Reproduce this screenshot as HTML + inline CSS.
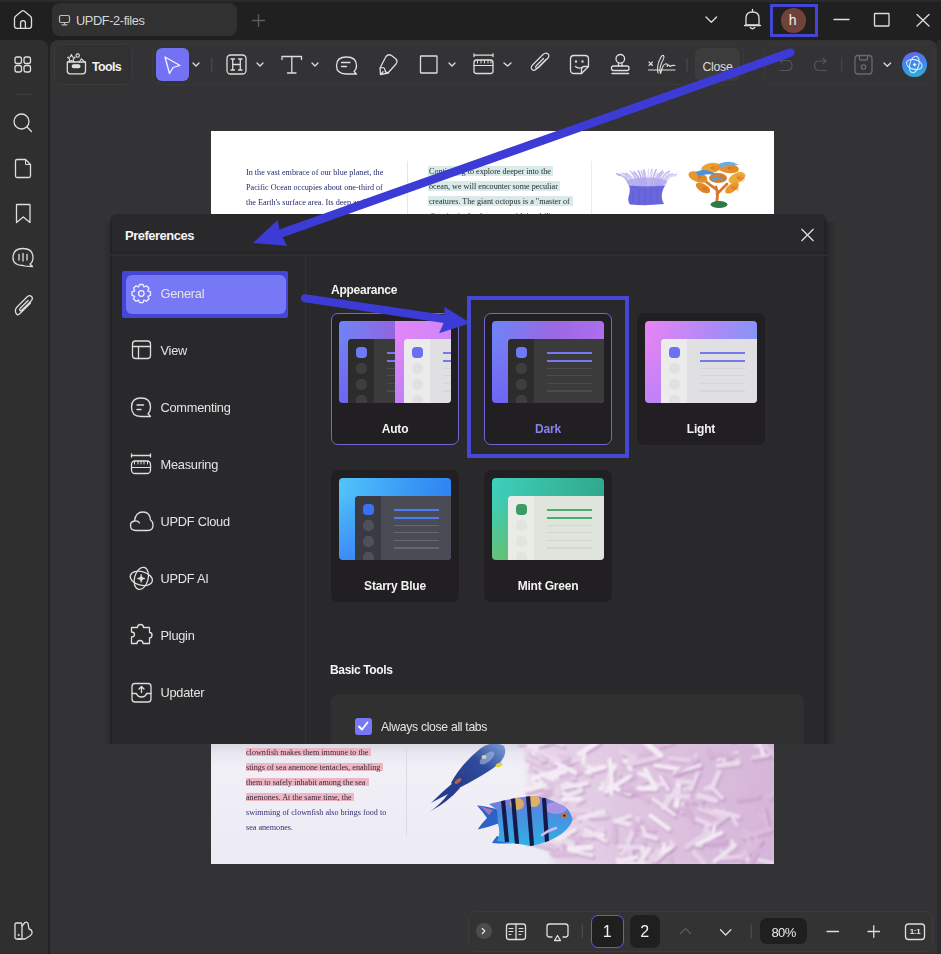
<!DOCTYPE html>
<html><head><meta charset="utf-8">
<style>
*{box-sizing:border-box;margin:0;padding:0}
html,body{width:941px;height:954px;overflow:hidden;background:#202020;font-family:"Liberation Sans",sans-serif;color:#e6e6e6}
.a{position:absolute}
svg{position:absolute;overflow:visible}
#top{left:0;top:0;width:941px;height:40px;background:#202020}
#side{left:0;top:40px;width:48px;height:914px;background:#2f2f2f;border-top-right-radius:8px}
#sep{left:48px;top:40px;width:2px;height:914px;background:#232323}
#main{left:50px;top:40px;width:887px;height:914px;background:#333234;border-radius:8px 8px 0 0}
#rstrip{left:937px;top:40px;width:4px;height:914px;background:#2b2a2c}
.nav{left:160.5px;font-size:12.8px;letter-spacing:-0.25px;color:#e4e4e4;line-height:16px;white-space:nowrap}
.lab{width:128px;text-align:center;font-size:12px;font-weight:bold;letter-spacing:-0.2px;line-height:16px;white-space:nowrap}
.ico{stroke:#dedede;fill:none;stroke-width:1.3;stroke-linecap:round;stroke-linejoin:round}
</style></head>
<body>
<div class="a" id="top"></div>
<div class="a" style="left:0;top:0;width:941px;height:2px;background:#2a2a2a"></div>
<div class="a" id="side"></div>
<div class="a" id="sep"></div>
<div class="a" id="rstrip"></div>
<div class="a" id="main"></div>


<!-- TOPBAR -->
<svg style="left:0;top:0" width="941" height="40" class="ico" stroke-width="1.2">
  <path d="M14.5 18.5 Q14.5 17 15.8 16 L21.6 11.2 Q23 10.2 24.4 11.2 L30.2 16 Q31.5 17 31.5 18.5 V26 Q31.5 28.3 29.2 28.3 H16.8 Q14.5 28.3 14.5 26 Z"/>
  <path d="M20.6 28.3 V22.8 Q20.6 20.6 23 20.6 Q25.4 20.6 25.4 22.8 V28.3"/>
</svg>
<div class="a" style="left:52px;top:3px;width:185px;height:33px;background:#313131;border-radius:8px"></div>
<svg style="left:0;top:0" width="941" height="40" fill="none" stroke="#bdbdbd" stroke-width="1.2" stroke-linecap="round" stroke-linejoin="round">
  <rect x="59.5" y="15.5" width="10" height="7" rx="1.5"/>
  <path d="M64.5 22.5 V24.5 M62 24.8 H67"/>
</svg>
<div class="a" style="left:76px;top:13px;font-size:12.8px;letter-spacing:-0.4px;color:#d6d6d6;line-height:16px;white-space:nowrap">UPDF-2-files</div>
<svg style="left:0;top:0" width="941" height="40" fill="none" stroke="#5c5c5c" stroke-width="1.3">
  <path d="M258.5 14 V27 M252 20.5 H265"/>
</svg>
<svg style="left:0;top:0" width="941" height="40" class="ico" stroke-width="1.2">
  <path d="M706 17 L711.3 22.3 L716.6 17"/>
  <path d="M746 25 V18 Q746 12 752.5 12 Q759 12 759 18 V25 Z" />
  <path d="M744.5 25.5 H760.5"/>
  <path d="M750.3 27.5 Q752.5 30 754.7 27.5"/>
  <path d="M752.5 9.5 V11.5"/>
  <path d="M834 19.5 H849"/>
  <rect x="874.5" y="13.5" width="14.5" height="12.5" rx="0.5"/>
  <path d="M917 14.5 L929 26 M929 14.5 L917 26"/>
</svg>
<div class="a" style="left:781px;top:8px;width:24.5px;height:24.5px;border-radius:50%;background:#714238"></div>
<div class="a" style="left:780.5px;top:11.5px;width:24.5px;text-align:center;font-size:14px;color:#f2f2f2;line-height:16px">h</div>
<div class="a" style="left:770px;top:4px;width:48px;height:33px;border:3px solid #4444d6"></div>

<!-- SIDEBAR ICONS -->
<svg style="left:0;top:40px" width="48" height="914" class="ico" stroke-width="1.2">
  <rect x="15" y="17" width="6.5" height="6.5" rx="2"/>
  <rect x="24" y="17" width="6.5" height="6.5" rx="2"/>
  <rect x="15" y="25.5" width="6.5" height="6.5" rx="2"/>
  <rect x="24" y="25.5" width="6.5" height="6.5" rx="2"/>
  <path d="M16 54.3 H32" stroke="#3c3c3c"/>
  <circle cx="21.5" cy="81.5" r="7.5"/>
  <path d="M27 87 L31.5 91.5"/>
  <path d="M15.5 121 Q15.5 119.5 17 119.5 H25.5 L30.5 124.5 V136 Q30.5 137.5 29 137.5 H17 Q15.5 137.5 15.5 136 Z"/>
  <path d="M25.5 119.5 V124.5 H30.5" stroke-width="1"/>
  <path d="M16.5 165 Q16.5 164.5 17 164.5 H29.5 Q30 164.5 30 165 V182.5 L23.3 177 L16.5 182.5 Z"/>
  <path d="M23 225.5 Q13 225.5 13 217.5 Q13 208.5 23 208.5 Q33 208.5 33 217.5 Q33 222 30 224 L32.5 226.5 Q26 226.5 23 225.5 Z"/>
  <path d="M19 214.5 V220 M23 213.5 V221 M27 214.5 V220"/>
  <path d="M30.5 263 L20 273.5 Q17 276.5 15.7 272.5 Q14.5 269.5 17.5 266.5 L27 257 Q29.5 254.5 31.5 256.5 Q33.5 258.5 31 261 L22 270 Q20.7 271.3 19.8 270.4 Q19 269.5 20.3 268.2 L28 260.5"/>
</svg>
<svg style="left:0;top:0" width="48" height="954" class="ico">
  <rect x="15" y="923" width="7" height="16" rx="1.5"/>
  <path d="M22 926 L25 922.5 Q27 921.5 28 923.5 L29 929 Q31.5 929.5 32 931.5 Q32.5 934 30.5 935.5 L25 939 H18"/>
  <circle cx="18.5" cy="935" r="0.6" stroke-width="1"/>
</svg>


<!-- TOOLBAR -->
<div class="a" style="left:54px;top:44px;width:78px;height:41px;border:1px solid #3a3a3a;border-radius:7px;background:#313131"></div>
<svg style="left:0;top:0" width="941" height="100" class="ico" stroke-width="1.15">
  <path d="M67.3 62 H85.5 V71 Q85.5 73.8 82.7 73.8 H70.1 Q67.3 73.8 67.3 71 Z"/>
  <rect x="72.3" y="64.8" width="7.6" height="2.8" rx="1.4" fill="#dedede"/>
  <path d="M71.40 54.60 L72.52 57.06 L75.20 57.36 L73.21 59.19 L73.75 61.84 L71.40 60.50 L69.05 61.84 L69.59 59.19 L67.60 57.36 L70.28 57.06 Z" stroke-width="1.1"/>
  <circle cx="77.7" cy="55.6" r="1.7" stroke-width="1.1"/>
  <path d="M79.3 62 L81.4 58.8 L84.6 62" stroke-width="1.1"/>
</svg>
<div class="a" style="left:92px;top:58.5px;font-size:12.5px;font-weight:bold;letter-spacing:-0.7px;color:#f0f0f0;line-height:16px">Tools</div>

<div class="a" style="left:152px;top:44px;width:592px;height:41px;border:1px solid #393939;border-radius:8px"></div>
<div class="a" style="left:156px;top:48px;width:32.5px;height:33px;background:#7472f4;border-radius:6px"></div>
<div class="a" style="left:764px;top:44px;width:171px;height:41px;border:1px solid #393939;border-radius:8px"></div>
<div class="a" style="left:695px;top:48px;width:45px;height:33px;background:#3c3c3c;border-radius:6px"></div>
<div class="a" style="left:702.5px;top:58.5px;font-size:12.3px;color:#dcdcdc;line-height:16px;letter-spacing:-0.3px">Close</div>

<svg style="left:0;top:0" width="941" height="100" class="ico" stroke-width="1.15">
  <path d="M165 57 L180 65.5 L173 67.5 L169.5 73.5 Z" stroke="#f4f4ff"/>
  <path d="M193 63 L196 66 L199 63"/>
  <path d="M211.7 58 V71.5" stroke="#4a4a4a"/>
  <rect x="227" y="55" width="19" height="19" rx="3.5"/>
  <path d="M231 59 H234.5 M232.7 59 V70 M231 70 H234.5 M238.5 59 H242 M240.3 59 V70 M238.5 70 H242 M232.7 64.5 H240.3"/>
  <path d="M257 63 L260 66 L263 63"/>
  <path d="M282 59.5 V56.5 H301.5 V59.5 M291.8 56.5 V73 M287.5 73 H296"/>
  <path d="M312 63 L315 66 L318 63"/>
  <path d="M346 74 Q336.5 74 336.5 65.5 Q336.5 57 346.5 57 Q356.5 57 356.5 65.5 Q356.5 69.5 354 71.5 L356.5 74 Z"/>
  <path d="M341.5 62.5 H350 M341.5 66.5 H346.5"/>
  <path d="M386 56.5 Q388.5 53.5 391.5 55.5 L396 59 Q398 61.5 396 64 L388 73 L380.5 74.5 L380 68 Z"/>
  <path d="M380.5 68 Q384.5 66.5 385 70 Q385 72.5 388 73" />
  <path d="M381.5 73.5 L383 71.8"/>
  <rect x="420.5" y="56" width="16.5" height="17" rx="0.5"/>
  <path d="M449 63 L452 66 L455 63"/>
  <path d="M474 55.2 H493 M474 53.8 V56.6 M493 53.8 V56.6"/>
  <rect x="474" y="60" width="19" height="13.5" rx="2.5"/>
  <path d="M474 65.5 H493 M477.5 60 V63 M481 60 V63 M484.5 60 V63 M488 60 V63 M491 60 V63" stroke-width="1"/>
  <path d="M504 63 L507.5 66 L511 63"/>
  <path d="M546 59.5 L537 68.5 Q534 71.5 532 69.5 Q530 67.5 533 64.5 L543 54.5 Q546 52 548 54 Q550 56 547.5 58.5 L538.5 67.5 Q537 69 536 68 Q535 67 536.5 65.5 L543.5 58.5" stroke-width="1.2"/>
  <path d="M574 55.5 H585 Q588.5 55.5 588.5 59 V66.5 L581.5 73.5 H574 Q570.5 73.5 570.5 70 V59 Q570.5 55.5 574 55.5 Z"/>
  <path d="M588.5 66.5 H584.5 Q581.5 66.5 581.5 69.5 V73.5"/>
  <path d="M575.5 66.5 Q578 69 581.5 67.5"/>
  <circle cx="576" cy="61.5" r="0.5" stroke-width="1.4"/>
  <circle cx="582.5" cy="61.5" r="0.5" stroke-width="1.4"/>
  <circle cx="620.3" cy="58.8" r="4.3"/>
  <path d="M618.5 63 V66 M622 63 V66"/>
  <rect x="611.5" y="66" width="17.5" height="4.5" rx="2"/>
  <path d="M612 73.5 H628.5"/>
  <path d="M649 62 L652.5 65.5 M652.5 62 L649 65.5" stroke-width="1.1"/>
  <path d="M648.5 70 H675" stroke-width="1"/>
  <path d="M658 73 Q656.5 66 660 59 Q662 54.5 663.5 55.5 Q665 57 661.5 63 Q659 69 660.5 73.5 Q661.5 70 663 66 Q665 63 667 64 Q668 67 667 66 Q669 64 670 66.5 Q672 65 675 65.5" stroke-width="1.1"/>
  <path d="M687 59 V71.5" stroke="#4a4a4a"/>
  <path d="M780 61 Q779 59.5 780.5 59.5 M779.5 60 L782 62.5 M780 60.5 H787 Q792 60.5 792 65.5 Q792 70.5 787 70.5 H780" stroke="#555" stroke-width="1.2"/>
  <path d="M826 61 L823 58.5 M826 61 L823 63.5 M826 61 H819 Q814.5 61 814.5 65.5 Q814.5 70.5 819 70.5 H826" stroke="#555" stroke-width="1.2"/>
  <path d="M841.7 58 V72" stroke="#454545"/>
  <path d="M858 55.5 H869 Q872 55.5 872 58.5 V71 Q872 74 869 74 H858 Q855 74 855 71 V58.5 Q855 55.5 858 55.5 Z" stroke="#6a6a6a"/>
  <path d="M859.5 55.5 V59 Q859.5 60 860.5 60 H866.5 Q867.5 60 867.5 59 V55.5" stroke="#6a6a6a"/>
  <circle cx="863.5" cy="67" r="2.2" stroke="#6a6a6a"/>
  <path d="M884 63 L887.3 66.3 L890.6 63"/>
</svg>
<div class="a" style="left:902px;top:52px;width:24.5px;height:24.5px;border-radius:50%;background:linear-gradient(170deg,#6a5ef0 0%,#3f86ec 45%,#2eb2d6 100%)"></div>
<svg style="left:0;top:0" width="941" height="100" fill="none" stroke="#ffffff" stroke-width="1.2">
  <ellipse cx="914.3" cy="64.5" rx="8" ry="4.8" transform="rotate(15 914.3 64.5)" stroke="#cdefff" stroke-width="1.1"/>
  <ellipse cx="914.3" cy="64.5" rx="4.5" ry="8.5" transform="rotate(15 914.3 64.5)" stroke="#cdefff" stroke-width="1.1"/>
  <path d="M914.6 62.8 L915.2 64 L916.4 64.6 L915.2 65.2 L914.6 66.4 L914 65.2 L912.8 64.6 L914 64 Z" fill="#fff" stroke-width="0.4"/>
</svg>

<!-- page top -->
<div class="a" style="left:211px;top:131px;width:563px;height:83px;background:#fff;overflow:hidden">
<div class="a" style="left:35px;top:34.5px;color:#232a6c;font-family:'Liberation Serif',serif;font-size:9px;line-height:12px;white-space:nowrap;transform:scaleX(0.905);transform-origin:0 0;">In the vast embrace of our blue planet, the</div>
<div class="a" style="left:35px;top:49.5px;color:#232a6c;font-family:'Liberation Serif',serif;font-size:9px;line-height:12px;white-space:nowrap;transform:scaleX(0.905);transform-origin:0 0;">Pacific Ocean occupies about one-third of</div>
<div class="a" style="left:35px;top:64.5px;color:#232a6c;font-family:'Liberation Serif',serif;font-size:9px;line-height:12px;white-space:nowrap;transform:scaleX(0.905);transform-origin:0 0;">the Earth's surface area. Its deep and</div>
<div class="a" style="left:35px;top:79.5px;color:#232a6c;font-family:'Liberation Serif',serif;font-size:9px;line-height:12px;white-space:nowrap;transform:scaleX(0.905);transform-origin:0 0;">and mysterious waters are home to</div>
<div class="a" style="left:217px;top:35.4px;width:125px;height:9.6px;background:#d9ebe8"></div>
<div class="a" style="left:218px;top:34px;color:#2a2a34;font-family:'Liberation Serif',serif;font-size:9px;line-height:12px;white-space:nowrap;transform:scaleX(0.905);transform-origin:0 0;">Continuing to explore deeper into the</div>
<div class="a" style="left:217px;top:50.4px;width:132px;height:9.6px;background:#d9ebe8"></div>
<div class="a" style="left:218px;top:49px;color:#2a2a34;font-family:'Liberation Serif',serif;font-size:9px;line-height:12px;white-space:nowrap;transform:scaleX(0.905);transform-origin:0 0;">ocean, we will encounter some peculiar</div>
<div class="a" style="left:217px;top:65.4px;width:144.5px;height:9.6px;background:#d9ebe8"></div>
<div class="a" style="left:218px;top:64px;color:#2a2a34;font-family:'Liberation Serif',serif;font-size:9px;line-height:12px;white-space:nowrap;transform:scaleX(0.905);transform-origin:0 0;">creatures. The giant octopus is a "master of</div>
<div class="a" style="left:218px;top:79px;color:#2a2a34;font-family:'Liberation Serif',serif;font-size:9px;line-height:12px;white-space:nowrap;transform:scaleX(0.905);transform-origin:0 0;">disguise in the deep sea, with its ability</div>
<div class="a" style="left:196px;top:30px;width:1px;height:60px;background:#e6e6ea"></div>
<div class="a" style="left:380px;top:30px;width:1px;height:60px;background:#ececf0"></div>
<svg style="left:0;top:0" width="563" height="83">
<path d="M417 53 Q420 58 418 64 Q416 70 419 73.5 Q435 75 453 73 Q450 68 451 62 Q452 57 455 53 Q436 57 417 53 Z" fill="#6a66dc"/>
<path d="M422 60 V72 M428 58 V73 M434 58 V74 M440 58 V73 M446 58 V72" stroke="#5c58d0" stroke-width="1" fill="none" opacity="0.6"/>
<path d="M418.0 54 Q414.2 44.0 405.3 42.6" stroke="#c8c0f2" stroke-width="1.5" fill="none" stroke-linecap="round"/>
<path d="M419.4 54 Q415.6 44.0 406.7 43.7" stroke="#b8b0ee" stroke-width="1.5" fill="none" stroke-linecap="round"/>
<path d="M420.9 54 Q418.0 44.0 411.1 44.7" stroke="#d6d0f6" stroke-width="1.5" fill="none" stroke-linecap="round"/>
<path d="M422.3 54 Q419.0 44.0 411.3 42.3" stroke="#c8c0f2" stroke-width="1.5" fill="none" stroke-linecap="round"/>
<path d="M423.8 54 Q421.0 44.0 414.6 42.3" stroke="#c8c0f2" stroke-width="1.5" fill="none" stroke-linecap="round"/>
<path d="M425.2 54 Q423.4 44.0 419.3 40.1" stroke="#d6d0f6" stroke-width="1.5" fill="none" stroke-linecap="round"/>
<path d="M426.6 54 Q424.9 44.0 420.9 41.5" stroke="#c8c0f2" stroke-width="1.5" fill="none" stroke-linecap="round"/>
<path d="M428.1 54 Q426.6 44.0 423.1 40.2" stroke="#d6d0f6" stroke-width="1.5" fill="none" stroke-linecap="round"/>
<path d="M429.5 54 Q427.7 44.0 423.4 41.6" stroke="#b8b0ee" stroke-width="1.5" fill="none" stroke-linecap="round"/>
<path d="M431.0 54 Q429.9 44.0 427.3 39.8" stroke="#b8b0ee" stroke-width="1.5" fill="none" stroke-linecap="round"/>
<path d="M432.4 54 Q431.8 44.0 430.2 39.9" stroke="#c8c0f2" stroke-width="1.5" fill="none" stroke-linecap="round"/>
<path d="M433.8 54 Q433.5 44.0 432.7 39.3" stroke="#b8b0ee" stroke-width="1.5" fill="none" stroke-linecap="round"/>
<path d="M435.3 54 Q434.7 44.0 433.2 39.1" stroke="#c8c0f2" stroke-width="1.5" fill="none" stroke-linecap="round"/>
<path d="M436.7 54 Q437.0 44.0 437.7 38.2" stroke="#e0dcf8" stroke-width="1.5" fill="none" stroke-linecap="round"/>
<path d="M438.2 54 Q438.9 44.0 440.7 38.6" stroke="#e0dcf8" stroke-width="1.5" fill="none" stroke-linecap="round"/>
<path d="M439.6 54 Q440.2 44.0 441.4 38.2" stroke="#d6d0f6" stroke-width="1.5" fill="none" stroke-linecap="round"/>
<path d="M441.0 54 Q442.3 44.0 445.2 38.7" stroke="#b8b0ee" stroke-width="1.5" fill="none" stroke-linecap="round"/>
<path d="M442.5 54 Q443.8 44.0 446.9 41.7" stroke="#e0dcf8" stroke-width="1.5" fill="none" stroke-linecap="round"/>
<path d="M443.9 54 Q445.2 44.0 448.4 42.6" stroke="#c8c0f2" stroke-width="1.5" fill="none" stroke-linecap="round"/>
<path d="M445.4 54 Q447.2 44.0 451.6 39.8" stroke="#b8b0ee" stroke-width="1.5" fill="none" stroke-linecap="round"/>
<path d="M446.8 54 Q448.5 44.0 452.6 41.6" stroke="#c8c0f2" stroke-width="1.5" fill="none" stroke-linecap="round"/>
<path d="M448.2 54 Q451.2 44.0 458.2 40.4" stroke="#b8b0ee" stroke-width="1.5" fill="none" stroke-linecap="round"/>
<path d="M449.7 54 Q452.2 44.0 458.2 42.0" stroke="#e0dcf8" stroke-width="1.5" fill="none" stroke-linecap="round"/>
<path d="M451.1 54 Q454.2 44.0 461.5 42.9" stroke="#c8c0f2" stroke-width="1.5" fill="none" stroke-linecap="round"/>
<path d="M452.6 54 Q456.4 44.0 465.4 43.4" stroke="#c8c0f2" stroke-width="1.5" fill="none" stroke-linecap="round"/>
<path d="M454.0 54 Q457.1 44.0 464.2 44.8" stroke="#e0dcf8" stroke-width="1.5" fill="none" stroke-linecap="round"/>
<ellipse cx="436" cy="51" rx="20" ry="4.5" fill="#aea6ec" opacity="0.75"/>
<path d="M505 73 Q508 64 505 56 M506 63 Q511 58 516 53 M505 58 Q499 54 494 50" stroke="#d8782a" stroke-width="2.8" fill="none" stroke-linecap="round"/>
<ellipse cx="508" cy="73.5" rx="8.5" ry="3.5" fill="#2d7a4a"/>
<ellipse cx="487" cy="46" rx="10" ry="5" fill="#e8962e" transform="rotate(20 487 46)"/>
<path d="M487.0 46.0 L493.9 44.1" stroke="#c8701e" stroke-width="0.7" opacity="0.7"/>
<path d="M487.0 46.0 L495.9 46.2" stroke="#c8701e" stroke-width="0.7" opacity="0.7"/>
<path d="M487.0 46.0 L495.5 48.5" stroke="#c8701e" stroke-width="0.7" opacity="0.7"/>
<path d="M487.0 46.0 L492.8 50.4" stroke="#c8701e" stroke-width="0.7" opacity="0.7"/>
<path d="M487.0 46.0 L488.6 51.4" stroke="#c8701e" stroke-width="0.7" opacity="0.7"/>
<ellipse cx="492" cy="57" rx="8" ry="4" fill="#e08a28" transform="rotate(30 492 57)"/>
<path d="M492.0 57.0 L498.2 56.2" stroke="#c8701e" stroke-width="0.7" opacity="0.7"/>
<path d="M492.0 57.0 L499.2 58.0" stroke="#c8701e" stroke-width="0.7" opacity="0.7"/>
<path d="M492.0 57.0 L498.2 59.8" stroke="#c8701e" stroke-width="0.7" opacity="0.7"/>
<path d="M492.0 57.0 L495.6 61.1" stroke="#c8701e" stroke-width="0.7" opacity="0.7"/>
<path d="M492.0 57.0 L492.0 61.6" stroke="#c8701e" stroke-width="0.7" opacity="0.7"/>
<ellipse cx="500" cy="37" rx="10" ry="5" fill="#f0a030" transform="rotate(-10 500 37)"/>
<path d="M500.0 37.0 L503.1 33.8" stroke="#c8701e" stroke-width="0.7" opacity="0.7"/>
<path d="M500.0 37.0 L506.9 35.1" stroke="#c8701e" stroke-width="0.7" opacity="0.7"/>
<path d="M500.0 37.0 L508.9 37.2" stroke="#c8701e" stroke-width="0.7" opacity="0.7"/>
<path d="M500.0 37.0 L508.5 39.5" stroke="#c8701e" stroke-width="0.7" opacity="0.7"/>
<path d="M500.0 37.0 L505.8 41.4" stroke="#c8701e" stroke-width="0.7" opacity="0.7"/>
<ellipse cx="517" cy="37" rx="11" ry="5" fill="#e89030" transform="rotate(10 517 37)"/>
<path d="M517.0 37.0 L523.4 34.6" stroke="#c8701e" stroke-width="0.7" opacity="0.7"/>
<path d="M517.0 37.0 L526.3 36.5" stroke="#c8701e" stroke-width="0.7" opacity="0.7"/>
<path d="M517.0 37.0 L526.7 38.8" stroke="#c8701e" stroke-width="0.7" opacity="0.7"/>
<path d="M517.0 37.0 L524.6 40.9" stroke="#c8701e" stroke-width="0.7" opacity="0.7"/>
<path d="M517.0 37.0 L520.4 42.2" stroke="#c8701e" stroke-width="0.7" opacity="0.7"/>
<ellipse cx="526" cy="47" rx="9" ry="5" fill="#f0a838" transform="rotate(-25 526 47)"/>
<path d="M526.0 47.0 L526.7 43.5" stroke="#c8701e" stroke-width="0.7" opacity="0.7"/>
<path d="M526.0 47.0 L530.6 44.3" stroke="#c8701e" stroke-width="0.7" opacity="0.7"/>
<path d="M526.0 47.0 L533.3 46.1" stroke="#c8701e" stroke-width="0.7" opacity="0.7"/>
<path d="M526.0 47.0 L534.1 48.4" stroke="#c8701e" stroke-width="0.7" opacity="0.7"/>
<path d="M526.0 47.0 L532.6 50.6" stroke="#c8701e" stroke-width="0.7" opacity="0.7"/>
<ellipse cx="521" cy="57" rx="8" ry="4" fill="#e89a30" transform="rotate(-35 521 57)"/>
<path d="M521.0 57.0 L520.4 54.4" stroke="#c8701e" stroke-width="0.7" opacity="0.7"/>
<path d="M521.0 57.0 L524.0 54.7" stroke="#c8701e" stroke-width="0.7" opacity="0.7"/>
<path d="M521.0 57.0 L526.9 55.9" stroke="#c8701e" stroke-width="0.7" opacity="0.7"/>
<path d="M521.0 57.0 L528.2 57.7" stroke="#c8701e" stroke-width="0.7" opacity="0.7"/>
<path d="M521.0 57.0 L527.5 59.5" stroke="#c8701e" stroke-width="0.7" opacity="0.7"/>
<ellipse cx="507" cy="47" rx="9" ry="5" fill="#d88028" transform="rotate(0 507 47)"/>
<path d="M507.0 47.0 L511.1 44.1" stroke="#c8701e" stroke-width="0.7" opacity="0.7"/>
<path d="M507.0 47.0 L514.0 45.8" stroke="#c8701e" stroke-width="0.7" opacity="0.7"/>
<path d="M507.0 47.0 L515.1 48.0" stroke="#c8701e" stroke-width="0.7" opacity="0.7"/>
<path d="M507.0 47.0 L514.0 50.2" stroke="#c8701e" stroke-width="0.7" opacity="0.7"/>
<path d="M507.0 47.0 L511.1 51.9" stroke="#c8701e" stroke-width="0.7" opacity="0.7"/>
<path d="M485 41 Q495 36 506 44 Q496 42 487 45 Z" fill="#4a90e0"/>
<path d="M508 33 Q519 28 528 34 Q518 33 510 37 Z" fill="#6aaee8"/>
<path d="M500 47 Q508 44 515 50 Q508 48 502 50 Z" fill="#5a9ee0"/>
</svg>
</div>
<div class="a" style="left:211px;top:744px;width:563px;height:120px;overflow:hidden;background:linear-gradient(180deg,#d9d7e2 0%,#e9e7f0 8%,#f1f0f7 20%,#efeef6 50%,#ecebf4 100%)">
<div class="a" style="left:35px;top:3.8px;width:125px;height:8.5px;background:#eeb6c2"></div>
<div class="a" style="left:35px;top:2.2px;color:#3a2a3c;font-family:'Liberation Serif',serif;font-size:9px;line-height:12px;white-space:nowrap;transform:scaleX(0.905);transform-origin:0 0;">clownfish makes them immune to the</div>
<div class="a" style="left:35px;top:18.75px;width:136.5px;height:8.5px;background:#eeb6c2"></div>
<div class="a" style="left:35px;top:17.15px;color:#3a2a3c;font-family:'Liberation Serif',serif;font-size:9px;line-height:12px;white-space:nowrap;transform:scaleX(0.905);transform-origin:0 0;">stings of sea anemone tentacles, enabling</div>
<div class="a" style="left:35px;top:33.699999999999996px;width:122.5px;height:8.5px;background:#eeb6c2"></div>
<div class="a" style="left:35px;top:32.1px;color:#3a2a3c;font-family:'Liberation Serif',serif;font-size:9px;line-height:12px;white-space:nowrap;transform:scaleX(0.905);transform-origin:0 0;">them to safely inhabit among the sea</div>
<div class="a" style="left:35px;top:48.64999999999999px;width:108px;height:8.5px;background:#eeb6c2"></div>
<div class="a" style="left:35px;top:47.05px;color:#3a2a3c;font-family:'Liberation Serif',serif;font-size:9px;line-height:12px;white-space:nowrap;transform:scaleX(0.905);transform-origin:0 0;">anemones. At the same time, the</div>
<div class="a" style="left:35px;top:61.8px;color:#2e2e70;font-family:'Liberation Serif',serif;font-size:9px;line-height:12px;white-space:nowrap;transform:scaleX(0.905);transform-origin:0 0;">swimming of clownfish also brings food to</div>
<div class="a" style="left:35px;top:76.8px;color:#2e2e70;font-family:'Liberation Serif',serif;font-size:9px;line-height:12px;white-space:nowrap;transform:scaleX(0.905);transform-origin:0 0;">sea anemones.</div>
<div class="a" style="left:195px;top:0;width:1px;height:92px;background:#dcdae6"></div>
<svg style="left:0;top:0" width="563" height="120">
<defs><linearGradient id="cg" x1="0" y1="0" x2="1" y2="0"><stop offset="0" stop-color="#e8d8ea"/><stop offset="0.4" stop-color="#dfc6e1"/><stop offset="1" stop-color="#d5b4d8"/></linearGradient><filter id="bl" x="-10%" y="-10%" width="120%" height="120%"><feGaussianBlur stdDeviation="4"/></filter><filter id="bl2" x="-5%" y="-5%" width="110%" height="110%"><feGaussianBlur stdDeviation="1.1"/></filter></defs>
<path d="M325 -5 Q310 35 326 65 Q338 95 345 125 H570 V-5 Z" fill="url(#cg)" filter="url(#bl)"/>
<g filter="url(#bl2)" stroke-linecap="round" fill="none">
<path d="M423.1 34.0 L417.0 25.3" stroke="#c8a2cb" stroke-width="4.9" opacity="0.6"/>
<path d="M372.8 57.0 L361.5 62.4" stroke="#bd92c2" stroke-width="4.9" opacity="0.6"/>
<path d="M371.9 96.9 L354.0 102.1" stroke="#c8a2cb" stroke-width="4.5" opacity="0.6"/>
<path d="M364.7 110.3 L342.8 111.5" stroke="#c8a2cb" stroke-width="5.1" opacity="0.6"/>
<path d="M530.9 111.8 L542.1 101.6" stroke="#bd92c2" stroke-width="5.1" opacity="0.6"/>
<path d="M417.8 51.0 L439.6 35.4" stroke="#bd92c2" stroke-width="5.8" opacity="0.6"/>
<path d="M371.7 16.6 L356.6 21.4" stroke="#c29ac6" stroke-width="5.5" opacity="0.6"/>
<path d="M473.6 60.0 L472.6 69.7" stroke="#c29ac6" stroke-width="5.6" opacity="0.6"/>
<path d="M420.3 51.5 L393.6 42.0" stroke="#c29ac6" stroke-width="6.4" opacity="0.6"/>
<path d="M459.0 86.8 L441.1 73.7" stroke="#c8a2cb" stroke-width="5.8" opacity="0.6"/>
<path d="M547.1 4.0 L552.3 -17.8" stroke="#c29ac6" stroke-width="4.5" opacity="0.6"/>
<path d="M432.9 100.7 L421.8 107.3" stroke="#bd92c2" stroke-width="6.3" opacity="0.6"/>
<path d="M351.9 79.5 L338.9 86.6" stroke="#c8a2cb" stroke-width="5.3" opacity="0.6"/>
<path d="M411.5 18.1 L422.8 21.2" stroke="#bd92c2" stroke-width="5.0" opacity="0.6"/>
<path d="M353.6 16.7 L341.3 18.6" stroke="#bd92c2" stroke-width="6.4" opacity="0.6"/>
<path d="M484.7 110.7 L494.6 121.3" stroke="#c29ac6" stroke-width="5.5" opacity="0.6"/>
<path d="M418.4 42.2 L437.9 57.4" stroke="#c8a2cb" stroke-width="5.2" opacity="0.6"/>
<path d="M454.2 126.1 L440.8 127.2" stroke="#bd92c2" stroke-width="5.2" opacity="0.6"/>
<path d="M411.9 10.3 L409.4 31.7" stroke="#bd92c2" stroke-width="4.9" opacity="0.6"/>
<path d="M334.6 18.0 L317.2 7.8" stroke="#bd92c2" stroke-width="6.0" opacity="0.6"/>
<path d="M460.7 16.1 L481.9 19.0" stroke="#c8a2cb" stroke-width="4.6" opacity="0.6"/>
<path d="M541.4 124.2 L535.9 111.6" stroke="#bd92c2" stroke-width="6.4" opacity="0.6"/>
<path d="M371.1 44.7 L351.1 38.3" stroke="#bd92c2" stroke-width="6.0" opacity="0.6"/>
<path d="M418.1 98.3 L422.6 119.3" stroke="#c29ac6" stroke-width="5.0" opacity="0.6"/>
<path d="M539.1 125.0 L548.3 105.0" stroke="#c29ac6" stroke-width="5.0" opacity="0.6"/>
<path d="M393.3 93.2 L375.0 92.8" stroke="#bd92c2" stroke-width="4.7" opacity="0.6"/>
<path d="M335.3 0.8 L319.4 4.8" stroke="#c8a2cb" stroke-width="5.5" opacity="0.6"/>
<path d="M561.4 87.0 L534.1 94.5" stroke="#c29ac6" stroke-width="6.3" opacity="0.6"/>
<path d="M561.6 125.4 L551.1 135.0" stroke="#bd92c2" stroke-width="5.3" opacity="0.6"/>
<path d="M377.0 26.5 L355.8 34.0" stroke="#c8a2cb" stroke-width="4.6" opacity="0.6"/>
<path d="M535.8 114.0 L512.2 116.5" stroke="#c8a2cb" stroke-width="4.8" opacity="0.6"/>
<path d="M362.8 101.0 L335.2 95.9" stroke="#bd92c2" stroke-width="4.6" opacity="0.6"/>
<path d="M514.4 98.7 L499.3 100.4" stroke="#c29ac6" stroke-width="6.4" opacity="0.6"/>
<path d="M419.0 99.6 L428.3 77.2" stroke="#c29ac6" stroke-width="5.3" opacity="0.6"/>
<path d="M427.8 48.5 L451.4 41.9" stroke="#c8a2cb" stroke-width="4.6" opacity="0.6"/>
<path d="M359.8 19.1 L334.9 29.7" stroke="#bd92c2" stroke-width="5.4" opacity="0.6"/>
<path d="M377.1 101.8 L350.5 91.4" stroke="#c8a2cb" stroke-width="6.3" opacity="0.6"/>
<path d="M419.9 82.4 L406.2 79.0" stroke="#c8a2cb" stroke-width="4.7" opacity="0.6"/>
<path d="M564.4 -1.1 L551.8 -15.0" stroke="#c29ac6" stroke-width="6.4" opacity="0.6"/>
<path d="M445.7 118.4 L464.3 102.9" stroke="#bd92c2" stroke-width="4.9" opacity="0.6"/>
<path d="M390.3 24.4 L374.6 28.2" stroke="#c8a2cb" stroke-width="6.4" opacity="0.6"/>
<path d="M396.9 73.2 L382.7 74.5" stroke="#c8a2cb" stroke-width="5.4" opacity="0.6"/>
<path d="M427.2 115.3 L405.5 120.0" stroke="#bd92c2" stroke-width="5.8" opacity="0.6"/>
<path d="M442.0 114.6 L460.3 106.2" stroke="#bd92c2" stroke-width="6.2" opacity="0.6"/>
<path d="M458.5 66.1 L478.3 68.0" stroke="#bd92c2" stroke-width="5.4" opacity="0.6"/>
<path d="M330.1 20.8 L316.3 15.9" stroke="#c29ac6" stroke-width="4.5" opacity="0.6"/>
<path d="M505.9 58.6 L489.2 53.6" stroke="#bd92c2" stroke-width="4.7" opacity="0.6"/>
<path d="M465.9 64.4 L468.9 53.5" stroke="#bd92c2" stroke-width="6.4" opacity="0.6"/>
<path d="M393.8 69.8 L369.2 76.2" stroke="#c29ac6" stroke-width="5.6" opacity="0.6"/>
<path d="M467.3 63.0 L469.1 40.3" stroke="#c29ac6" stroke-width="5.3" opacity="0.6"/>
<path d="M478.8 54.6 L457.6 54.0" stroke="#bd92c2" stroke-width="6.1" opacity="0.6"/>
<path d="M444.4 87.1 L424.2 83.6" stroke="#bd92c2" stroke-width="4.7" opacity="0.6"/>
<path d="M504.8 119.4 L525.4 103.2" stroke="#c8a2cb" stroke-width="5.4" opacity="0.6"/>
<path d="M465.0 30.7 L490.4 23.2" stroke="#bd92c2" stroke-width="5.6" opacity="0.6"/>
<path d="M358.4 14.8 L345.1 15.7" stroke="#bd92c2" stroke-width="4.9" opacity="0.6"/>
<path d="M347.2 28.3 L321.8 23.4" stroke="#bd92c2" stroke-width="6.0" opacity="0.6"/>
<path d="M382.2 113.6 L359.4 107.9" stroke="#bd92c2" stroke-width="4.6" opacity="0.6"/>
<path d="M543.1 15.6 L558.7 13.0" stroke="#bd92c2" stroke-width="5.0" opacity="0.6"/>
<path d="M438.3 120.8 L408.6 122.7" stroke="#c8a2cb" stroke-width="6.0" opacity="0.6"/>
<path d="M381.5 105.2 L360.3 106.8" stroke="#c29ac6" stroke-width="5.3" opacity="0.6"/>
<path d="M377.7 41.1 L353.5 46.1" stroke="#bd92c2" stroke-width="4.6" opacity="0.6"/>
<path d="M463.1 -0.5 L451.6 3.1" stroke="#c29ac6" stroke-width="5.0" opacity="0.6"/>
<path d="M480.8 40.1 L467.7 39.3" stroke="#c8a2cb" stroke-width="4.6" opacity="0.6"/>
<path d="M524.9 125.1 L538.6 123.1" stroke="#c8a2cb" stroke-width="5.2" opacity="0.6"/>
<path d="M339.3 31.5 L323.7 26.4" stroke="#bd92c2" stroke-width="5.2" opacity="0.6"/>
<path d="M431.3 13.8 L454.0 2.5" stroke="#c8a2cb" stroke-width="4.6" opacity="0.6"/>
<path d="M365.8 30.6 L347.2 20.8" stroke="#c8a2cb" stroke-width="5.9" opacity="0.6"/>
<path d="M360.4 88.1 L340.5 99.4" stroke="#bd92c2" stroke-width="6.3" opacity="0.6"/>
<path d="M349.3 52.3 L330.1 41.5" stroke="#bd92c2" stroke-width="4.5" opacity="0.6"/>
<path d="M362.7 101.2 L351.1 96.2" stroke="#c8a2cb" stroke-width="6.3" opacity="0.6"/>
<path d="M448.4 109.2 L436.8 124.0" stroke="#c8a2cb" stroke-width="6.4" opacity="0.6"/>
<path d="M408.6 117.5 L423.4 129.9" stroke="#c29ac6" stroke-width="4.5" opacity="0.6"/>
<path d="M356.0 28.0 L344.5 32.7" stroke="#c29ac6" stroke-width="4.7" opacity="0.6"/>
<path d="M404.8 23.2 L396.1 42.6" stroke="#c8a2cb" stroke-width="6.4" opacity="0.6"/>
<path d="M450.8 34.7 L458.7 47.8" stroke="#bd92c2" stroke-width="6.1" opacity="0.6"/>
<path d="M389.3 -0.6 L369.7 12.0" stroke="#bd92c2" stroke-width="6.1" opacity="0.6"/>
<path d="M379.7 68.6 L350.8 69.5" stroke="#c29ac6" stroke-width="6.4" opacity="0.6"/>
<path d="M527.5 10.8 L508.5 17.7" stroke="#c29ac6" stroke-width="4.5" opacity="0.6"/>
<path d="M434.0 105.5 L409.7 104.7" stroke="#c8a2cb" stroke-width="5.1" opacity="0.6"/>
<path d="M426.8 124.7 L439.1 107.5" stroke="#c8a2cb" stroke-width="6.0" opacity="0.6"/>
<path d="M432.1 79.7 L424.7 88.2" stroke="#c8a2cb" stroke-width="5.0" opacity="0.6"/>
<path d="M346.0 13.9 L330.3 9.5" stroke="#bd92c2" stroke-width="5.4" opacity="0.6"/>
<path d="M349.5 18.2 L324.9 8.0" stroke="#c8a2cb" stroke-width="4.7" opacity="0.6"/>
<path d="M404.2 84.2 L405.1 98.0" stroke="#c29ac6" stroke-width="5.3" opacity="0.6"/>
<path d="M370.2 56.7 L353.5 57.7" stroke="#c29ac6" stroke-width="5.0" opacity="0.6"/>
<path d="M565.4 122.0 L549.8 118.2" stroke="#c29ac6" stroke-width="5.8" opacity="0.6"/>
<path d="M419.0 122.5 L411.6 130.1" stroke="#bd92c2" stroke-width="5.6" opacity="0.6"/>
<path d="M445.2 46.6 L429.6 46.4" stroke="#bd92c2" stroke-width="4.8" opacity="0.6"/>
<path d="M334.8 62.6 L321.9 66.1" stroke="#bd92c2" stroke-width="6.3" opacity="0.6"/>
<path d="M341.5 48.9 L327.7 57.6" stroke="#c29ac6" stroke-width="5.0" opacity="0.6"/>
<path d="M471.2 27.3 L446.1 23.5" stroke="#c29ac6" stroke-width="4.9" opacity="0.6"/>
<path d="M505.2 82.5 L519.0 72.0" stroke="#bd92c2" stroke-width="5.5" opacity="0.6"/>
<path d="M567.8 39.4 L582.6 55.6" stroke="#c8a2cb" stroke-width="6.4" opacity="0.6"/>
<path d="M347.9 80.6 L322.8 70.5" stroke="#c29ac6" stroke-width="5.0" opacity="0.6"/>
<path d="M509.1 78.6 L514.6 67.8" stroke="#bd92c2" stroke-width="5.4" opacity="0.6"/>
<path d="M453.8 65.1 L467.3 46.8" stroke="#c8a2cb" stroke-width="5.0" opacity="0.6"/>
<path d="M477.1 104.4 L496.1 92.3" stroke="#c8a2cb" stroke-width="6.2" opacity="0.6"/>
<path d="M392.7 87.1 L381.3 94.2" stroke="#c8a2cb" stroke-width="6.0" opacity="0.6"/>
<path d="M356.1 43.9 L336.4 35.9" stroke="#bd92c2" stroke-width="5.1" opacity="0.6"/>
<path d="M483.9 78.6 L475.1 63.5" stroke="#c8a2cb" stroke-width="5.0" opacity="0.6"/>
<path d="M522.3 -2.6 L522.1 -19.4" stroke="#bd92c2" stroke-width="6.0" opacity="0.6"/>
<path d="M490.7 66.6 L513.8 74.7" stroke="#c29ac6" stroke-width="5.4" opacity="0.6"/>
<path d="M347.6 29.8 L323.8 36.3" stroke="#c29ac6" stroke-width="5.0" opacity="0.6"/>
<path d="M508.5 23.7 L529.1 21.1" stroke="#c29ac6" stroke-width="5.1" opacity="0.6"/>
<path d="M446.3 46.7 L435.9 27.9" stroke="#c8a2cb" stroke-width="4.9" opacity="0.6"/>
<path d="M487.6 77.2 L500.6 82.7" stroke="#c29ac6" stroke-width="5.3" opacity="0.6"/>
<path d="M509.4 30.0 L501.9 46.8" stroke="#c29ac6" stroke-width="5.5" opacity="0.6"/>
<path d="M343.2 -1.4 L320.3 4.8" stroke="#c29ac6" stroke-width="5.8" opacity="0.6"/>
<path d="M496.2 87.0 L490.8 103.5" stroke="#c29ac6" stroke-width="5.8" opacity="0.6"/>
<path d="M444.1 57.4 L464.7 72.6" stroke="#c29ac6" stroke-width="4.7" opacity="0.6"/>
<path d="M566.2 22.9 L577.5 19.1" stroke="#bd92c2" stroke-width="6.3" opacity="0.6"/>
<path d="M528.5 56.7 L548.2 53.5" stroke="#c29ac6" stroke-width="6.2" opacity="0.6"/>
<path d="M380.5 31.9 L367.7 24.5" stroke="#bd92c2" stroke-width="4.6" opacity="0.6"/>
<path d="M369.1 72.6 L340.0 71.8" stroke="#bd92c2" stroke-width="5.0" opacity="0.6"/>
<path d="M527.9 14.2 L500.0 13.0" stroke="#c29ac6" stroke-width="4.9" opacity="0.6"/>
<path d="M393.4 88.4 L375.7 79.7" stroke="#c8a2cb" stroke-width="4.9" opacity="0.6"/>
<path d="M329.3 0.2 L309.2 0.4" stroke="#c29ac6" stroke-width="5.2" opacity="0.6"/>
<path d="M364.1 36.3 L346.8 39.3" stroke="#c29ac6" stroke-width="5.4" opacity="0.6"/>
<path d="M345.6 106.2 L320.1 98.8" stroke="#bd92c2" stroke-width="6.0" opacity="0.6"/>
<path d="M553.6 12.6 L547.1 -9.4" stroke="#c8a2cb" stroke-width="6.4" opacity="0.6"/>
<path d="M419.9 34.7 L396.4 49.6" stroke="#c29ac6" stroke-width="5.8" opacity="0.6"/>
<path d="M420.9 73.6 L405.6 79.5" stroke="#c8a2cb" stroke-width="5.7" opacity="0.6"/>
<path d="M353.2 3.3 L338.0 -2.9" stroke="#c29ac6" stroke-width="4.6" opacity="0.6"/>
<path d="M404.7 118.6 L402.6 135.5" stroke="#bd92c2" stroke-width="4.8" opacity="0.6"/>
<path d="M419.6 21.7 L446.5 15.6" stroke="#c29ac6" stroke-width="6.5" opacity="0.6"/>
<path d="M487.5 102.6 L512.3 90.6" stroke="#c29ac6" stroke-width="5.7" opacity="0.6"/>
<path d="M505.1 68.4 L529.1 74.6" stroke="#c8a2cb" stroke-width="6.3" opacity="0.6"/>
<path d="M512.4 55.6 L501.8 44.8" stroke="#c29ac6" stroke-width="6.1" opacity="0.6"/>
<path d="M553.7 3.4 L568.0 15.1" stroke="#bd92c2" stroke-width="5.9" opacity="0.6"/>
<path d="M402.3 41.7 L400.3 18.1" stroke="#c29ac6" stroke-width="5.7" opacity="0.6"/>
<path d="M488.3 30.8 L481.4 47.6" stroke="#c29ac6" stroke-width="4.9" opacity="0.6"/>
<path d="M371.5 48.3 L357.5 54.0" stroke="#bd92c2" stroke-width="5.6" opacity="0.6"/>
<path d="M459.1 114.8 L464.4 137.0" stroke="#c29ac6" stroke-width="5.3" opacity="0.6"/>
<path d="M450.8 126.5 L460.7 136.1" stroke="#bd92c2" stroke-width="5.8" opacity="0.6"/>
<path d="M411.7 8.8 L425.4 15.9" stroke="#c29ac6" stroke-width="5.8" opacity="0.6"/>
<path d="M467.4 30.6 L486.8 17.3" stroke="#c29ac6" stroke-width="5.8" opacity="0.6"/>
<path d="M430.9 50.7 L412.4 48.4" stroke="#bd92c2" stroke-width="5.9" opacity="0.6"/>
<path d="M345.5 41.0 L317.5 48.2" stroke="#bd92c2" stroke-width="6.5" opacity="0.6"/>
<path d="M451.0 13.4 L432.1 -2.7" stroke="#c8a2cb" stroke-width="5.1" opacity="0.6"/>
<path d="M395.0 25.1 L376.9 30.4" stroke="#c29ac6" stroke-width="5.1" opacity="0.6"/>
<path d="M560.5 55.0 L576.6 36.9" stroke="#c8a2cb" stroke-width="6.3" opacity="0.6"/>
<path d="M336.3 -0.2 L309.4 -6.7" stroke="#bd92c2" stroke-width="5.3" opacity="0.6"/>
<path d="M473.0 58.5 L492.0 58.5" stroke="#bd92c2" stroke-width="5.8" opacity="0.6"/>
<path d="M532.7 117.5 L550.8 98.9" stroke="#bd92c2" stroke-width="6.0" opacity="0.6"/>
<path d="M356.0 29.3 L337.0 37.3" stroke="#c29ac6" stroke-width="6.4" opacity="0.6"/>
<path d="M557.9 85.7 L553.7 67.0" stroke="#bd92c2" stroke-width="6.3" opacity="0.6"/>
<path d="M447.0 96.4 L435.0 93.2" stroke="#bd92c2" stroke-width="4.7" opacity="0.6"/>
<path d="M396.0 98.7 L376.3 88.2" stroke="#c29ac6" stroke-width="5.3" opacity="0.6"/>
<path d="M361.0 36.5 L339.0 42.9" stroke="#bd92c2" stroke-width="5.4" opacity="0.6"/>
<path d="M365.6 87.8 L347.9 97.5" stroke="#c29ac6" stroke-width="4.8" opacity="0.6"/>
<path d="M421.6 32.0 L415.5 23.3" stroke="#e0c6e1" stroke-width="3.6"/>
<path d="M416.4 24.5 L407.2 22.1" stroke="#e0c6e1" stroke-width="2.9"/>
<path d="M371.3 55.0 L360.0 60.4" stroke="#e6d2e7" stroke-width="5.4"/>
<path d="M364.1 58.4 L362.0 67.3" stroke="#e6d2e7" stroke-width="4.3"/>
<path d="M370.4 94.9 L352.5 100.1" stroke="#d6b4d8" stroke-width="5.4"/>
<path d="M356.1 99.1 L352.9 106.2" stroke="#d6b4d8" stroke-width="4.3"/>
<path d="M363.2 108.3 L341.3 109.5" stroke="#dbbddc" stroke-width="5.2"/>
<path d="M529.4 109.8 L540.6 99.6" stroke="#dbbddc" stroke-width="4.5"/>
<path d="M537.9 102.1 L536.9 90.7" stroke="#dbbddc" stroke-width="3.6"/>
<path d="M416.3 49.0 L438.1 33.4" stroke="#e0c6e1" stroke-width="4.7"/>
<path d="M434.7 35.9 L444.3 36.6" stroke="#e0c6e1" stroke-width="3.8"/>
<path d="M370.2 14.6 L355.1 19.4" stroke="#eadaeb" stroke-width="3.9"/>
<path d="M361.3 17.4 L350.7 12.6" stroke="#eadaeb" stroke-width="3.1"/>
<path d="M472.1 58.0 L471.1 67.7" stroke="#f0e4f0" stroke-width="3.8"/>
<path d="M471.5 63.8 L475.6 68.5" stroke="#f0e4f0" stroke-width="3.1"/>
<path d="M418.8 49.5 L392.1 40.0" stroke="#f4ecf4" stroke-width="4.6"/>
<path d="M396.5 41.6 L388.8 44.7" stroke="#f4ecf4" stroke-width="3.7"/>
<path d="M457.5 84.8 L439.6 71.7" stroke="#f4ecf4" stroke-width="4.4"/>
<path d="M545.6 2.0 L550.8 -19.8" stroke="#e6d2e7" stroke-width="4.8"/>
<path d="M549.1 -12.6 L556.3 -17.4" stroke="#e6d2e7" stroke-width="3.8"/>
<path d="M431.4 98.7 L420.3 105.3" stroke="#dbbddc" stroke-width="4.4"/>
<path d="M421.4 104.6 L414.1 103.4" stroke="#dbbddc" stroke-width="3.5"/>
<path d="M350.4 77.5 L337.4 84.6" stroke="#eadaeb" stroke-width="5.0"/>
<path d="M410.0 16.1 L421.3 19.2" stroke="#f4ecf4" stroke-width="5.1"/>
<path d="M416.2 17.8 L419.7 25.2" stroke="#f4ecf4" stroke-width="4.1"/>
<path d="M352.1 14.7 L339.8 16.6" stroke="#e6d2e7" stroke-width="5.1"/>
<path d="M345.7 15.6 L342.2 21.1" stroke="#e6d2e7" stroke-width="4.1"/>
<path d="M483.2 108.7 L493.1 119.3" stroke="#e6d2e7" stroke-width="5.0"/>
<path d="M491.1 117.2 L489.5 127.0" stroke="#e6d2e7" stroke-width="4.0"/>
<path d="M416.9 40.2 L436.4 55.4" stroke="#dbbddc" stroke-width="5.1"/>
<path d="M452.7 124.1 L439.3 125.2" stroke="#d6b4d8" stroke-width="5.5"/>
<path d="M440.7 125.1 L434.8 120.1" stroke="#d6b4d8" stroke-width="4.4"/>
<path d="M410.4 8.3 L407.9 29.7" stroke="#e0c6e1" stroke-width="5.1"/>
<path d="M408.4 25.2 L412.6 30.1" stroke="#e0c6e1" stroke-width="4.1"/>
<path d="M333.1 16.0 L315.7 5.8" stroke="#e6d2e7" stroke-width="4.2"/>
<path d="M318.2 7.3 L316.6 -4.1" stroke="#e6d2e7" stroke-width="3.4"/>
<path d="M459.2 14.1 L480.4 17.0" stroke="#e6d2e7" stroke-width="4.4"/>
<path d="M477.6 16.6 L485.3 11.0" stroke="#e6d2e7" stroke-width="3.5"/>
<path d="M539.9 122.2 L534.4 109.6" stroke="#eadaeb" stroke-width="4.7"/>
<path d="M537.0 115.7 L529.4 112.2" stroke="#eadaeb" stroke-width="3.8"/>
<path d="M369.6 42.7 L349.6 36.3" stroke="#e6d2e7" stroke-width="4.8"/>
<path d="M352.4 37.2 L342.6 41.5" stroke="#e6d2e7" stroke-width="3.8"/>
<path d="M416.6 96.3 L421.1 117.3" stroke="#e6d2e7" stroke-width="4.0"/>
<path d="M420.4 114.0 L414.9 121.5" stroke="#e6d2e7" stroke-width="3.2"/>
<path d="M537.6 123.0 L546.8 103.0" stroke="#d6b4d8" stroke-width="4.7"/>
<path d="M544.2 108.7 L553.7 104.5" stroke="#d6b4d8" stroke-width="3.7"/>
<path d="M391.8 91.2 L373.5 90.8" stroke="#f4ecf4" stroke-width="4.2"/>
<path d="M333.8 -1.2 L317.9 2.8" stroke="#f0e4f0" stroke-width="4.7"/>
<path d="M325.3 0.9 L322.2 7.2" stroke="#f0e4f0" stroke-width="3.7"/>
<path d="M559.9 85.0 L532.6 92.5" stroke="#dbbddc" stroke-width="5.0"/>
<path d="M540.6 90.3 L531.8 85.9" stroke="#dbbddc" stroke-width="4.0"/>
<path d="M560.1 123.4 L549.6 133.0" stroke="#f0e4f0" stroke-width="5.5"/>
<path d="M375.5 24.5 L354.3 32.0" stroke="#dbbddc" stroke-width="5.3"/>
<path d="M534.3 112.0 L510.7 114.5" stroke="#e6d2e7" stroke-width="3.9"/>
<path d="M518.5 113.7 L509.5 106.6" stroke="#e6d2e7" stroke-width="3.2"/>
<path d="M361.3 99.0 L333.7 93.9" stroke="#eadaeb" stroke-width="3.8"/>
<path d="M347.0 96.3 L341.9 99.6" stroke="#eadaeb" stroke-width="3.0"/>
<path d="M512.9 96.7 L497.8 98.4" stroke="#d6b4d8" stroke-width="4.2"/>
<path d="M502.1 97.9 L494.6 92.1" stroke="#d6b4d8" stroke-width="3.4"/>
<path d="M417.5 97.6 L426.8 75.2" stroke="#eadaeb" stroke-width="4.7"/>
<path d="M425.2 79.0 L422.1 72.9" stroke="#eadaeb" stroke-width="3.7"/>
<path d="M426.3 46.5 L449.9 39.9" stroke="#eadaeb" stroke-width="5.4"/>
<path d="M358.3 17.1 L333.4 27.7" stroke="#d6b4d8" stroke-width="4.4"/>
<path d="M337.1 26.1 L329.1 23.5" stroke="#d6b4d8" stroke-width="3.5"/>
<path d="M375.6 99.8 L349.0 89.4" stroke="#dbbddc" stroke-width="4.0"/>
<path d="M353.5 91.2 L350.6 82.1" stroke="#dbbddc" stroke-width="3.2"/>
<path d="M418.4 80.4 L404.7 77.0" stroke="#f0e4f0" stroke-width="4.7"/>
<path d="M562.9 -3.1 L550.3 -17.0" stroke="#eadaeb" stroke-width="5.0"/>
<path d="M556.6 -10.1 L547.5 -11.4" stroke="#eadaeb" stroke-width="4.0"/>
<path d="M444.2 116.4 L462.8 100.9" stroke="#eadaeb" stroke-width="4.3"/>
<path d="M460.3 103.0 L460.1 96.9" stroke="#eadaeb" stroke-width="3.4"/>
<path d="M388.8 22.4 L373.1 26.2" stroke="#eadaeb" stroke-width="4.6"/>
<path d="M379.7 24.6 L370.2 19.3" stroke="#eadaeb" stroke-width="3.7"/>
<path d="M395.4 71.2 L381.2 72.5" stroke="#e6d2e7" stroke-width="3.8"/>
<path d="M384.7 72.2 L376.8 65.7" stroke="#e6d2e7" stroke-width="3.1"/>
<path d="M425.7 113.3 L404.0 118.0" stroke="#f4ecf4" stroke-width="3.5"/>
<path d="M440.5 112.6 L458.8 104.2" stroke="#f4ecf4" stroke-width="4.4"/>
<path d="M451.3 107.6 L453.2 100.3" stroke="#f4ecf4" stroke-width="3.5"/>
<path d="M457.0 64.1 L476.8 66.0" stroke="#d6b4d8" stroke-width="4.8"/>
<path d="M472.8 65.6 L479.0 73.8" stroke="#d6b4d8" stroke-width="3.8"/>
<path d="M328.6 18.8 L314.8 13.9" stroke="#e6d2e7" stroke-width="4.0"/>
<path d="M317.9 15.0 L315.2 7.7" stroke="#e6d2e7" stroke-width="3.2"/>
<path d="M504.4 56.6 L487.7 51.6" stroke="#eadaeb" stroke-width="5.4"/>
<path d="M492.7 53.1 L485.8 56.3" stroke="#eadaeb" stroke-width="4.3"/>
<path d="M464.4 62.4 L467.4 51.5" stroke="#eadaeb" stroke-width="4.0"/>
<path d="M392.3 67.8 L367.7 74.2" stroke="#f0e4f0" stroke-width="5.0"/>
<path d="M376.2 72.0 L372.5 79.4" stroke="#f0e4f0" stroke-width="4.0"/>
<path d="M465.8 61.0 L467.6 38.3" stroke="#f4ecf4" stroke-width="5.2"/>
<path d="M477.3 52.6 L456.1 52.0" stroke="#eadaeb" stroke-width="4.6"/>
<path d="M442.9 85.1 L422.7 81.6" stroke="#dbbddc" stroke-width="4.9"/>
<path d="M426.9 82.4 L421.2 73.3" stroke="#dbbddc" stroke-width="3.9"/>
<path d="M503.3 117.4 L523.9 101.2" stroke="#f0e4f0" stroke-width="4.3"/>
<path d="M521.1 103.4 L521.1 97.2" stroke="#f0e4f0" stroke-width="3.4"/>
<path d="M463.5 28.7 L488.9 21.2" stroke="#f0e4f0" stroke-width="3.7"/>
<path d="M356.9 12.8 L343.6 13.7" stroke="#e0c6e1" stroke-width="4.2"/>
<path d="M345.7 26.3 L320.3 21.4" stroke="#e0c6e1" stroke-width="3.6"/>
<path d="M326.6 22.6 L317.8 28.1" stroke="#e0c6e1" stroke-width="2.8"/>
<path d="M380.7 111.6 L357.9 105.9" stroke="#f0e4f0" stroke-width="3.6"/>
<path d="M541.6 13.6 L557.2 11.0" stroke="#e6d2e7" stroke-width="3.9"/>
<path d="M436.8 118.8 L407.1 120.7" stroke="#f4ecf4" stroke-width="3.6"/>
<path d="M419.5 119.9 L415.5 124.7" stroke="#f4ecf4" stroke-width="2.9"/>
<path d="M380.0 103.2 L358.8 104.8" stroke="#f4ecf4" stroke-width="5.4"/>
<path d="M363.0 104.5 L356.3 98.8" stroke="#f4ecf4" stroke-width="4.3"/>
<path d="M376.2 39.1 L352.0 44.1" stroke="#f4ecf4" stroke-width="3.8"/>
<path d="M361.0 42.2 L354.6 38.3" stroke="#f4ecf4" stroke-width="3.0"/>
<path d="M461.6 -2.5 L450.1 1.1" stroke="#e6d2e7" stroke-width="4.2"/>
<path d="M452.4 0.4 L442.7 -4.0" stroke="#e6d2e7" stroke-width="3.4"/>
<path d="M479.3 38.1 L466.2 37.3" stroke="#eadaeb" stroke-width="4.7"/>
<path d="M523.4 123.1 L537.1 121.1" stroke="#dbbddc" stroke-width="4.7"/>
<path d="M337.8 29.5 L322.2 24.4" stroke="#e6d2e7" stroke-width="3.6"/>
<path d="M429.8 11.8 L452.5 0.5" stroke="#dbbddc" stroke-width="4.2"/>
<path d="M443.1 5.2 L445.1 -4.0" stroke="#dbbddc" stroke-width="3.4"/>
<path d="M364.3 28.6 L345.7 18.8" stroke="#f4ecf4" stroke-width="4.1"/>
<path d="M353.5 22.9 L347.6 24.2" stroke="#f4ecf4" stroke-width="3.3"/>
<path d="M358.9 86.1 L339.0 97.4" stroke="#eadaeb" stroke-width="4.5"/>
<path d="M342.4 95.5 L333.0 93.7" stroke="#eadaeb" stroke-width="3.6"/>
<path d="M347.8 50.3 L328.6 39.5" stroke="#e6d2e7" stroke-width="5.4"/>
<path d="M331.0 40.8 L329.3 30.1" stroke="#e6d2e7" stroke-width="4.3"/>
<path d="M361.2 99.2 L349.6 94.2" stroke="#eadaeb" stroke-width="5.4"/>
<path d="M354.9 96.5 L346.3 99.1" stroke="#eadaeb" stroke-width="4.3"/>
<path d="M446.9 107.2 L435.3 122.0" stroke="#e6d2e7" stroke-width="5.5"/>
<path d="M407.1 115.5 L421.9 127.9" stroke="#f0e4f0" stroke-width="4.8"/>
<path d="M420.0 126.3 L428.5 126.4" stroke="#f0e4f0" stroke-width="3.8"/>
<path d="M354.5 26.0 L343.0 30.7" stroke="#f0e4f0" stroke-width="4.8"/>
<path d="M347.5 28.8 L345.1 36.8" stroke="#f0e4f0" stroke-width="3.8"/>
<path d="M403.3 21.2 L394.6 40.6" stroke="#eadaeb" stroke-width="5.3"/>
<path d="M449.3 32.7 L457.2 45.8" stroke="#f0e4f0" stroke-width="3.8"/>
<path d="M387.8 -2.6 L368.2 10.0" stroke="#f4ecf4" stroke-width="5.0"/>
<path d="M373.4 6.6 L372.4 17.8" stroke="#f4ecf4" stroke-width="4.0"/>
<path d="M378.2 66.6 L349.3 67.5" stroke="#e6d2e7" stroke-width="4.4"/>
<path d="M526.0 8.8 L507.0 15.7" stroke="#eadaeb" stroke-width="3.8"/>
<path d="M514.6 13.0 L512.3 19.3" stroke="#eadaeb" stroke-width="3.1"/>
<path d="M432.5 103.5 L408.2 102.7" stroke="#eadaeb" stroke-width="4.4"/>
<path d="M417.7 103.0 L410.2 110.1" stroke="#eadaeb" stroke-width="3.5"/>
<path d="M425.3 122.7 L437.6 105.5" stroke="#f0e4f0" stroke-width="5.4"/>
<path d="M433.2 111.7 L430.9 104.1" stroke="#f0e4f0" stroke-width="4.4"/>
<path d="M430.6 77.7 L423.2 86.2" stroke="#d6b4d8" stroke-width="3.9"/>
<path d="M424.9 84.2 L426.5 92.3" stroke="#d6b4d8" stroke-width="3.1"/>
<path d="M344.5 11.9 L328.8 7.5" stroke="#e6d2e7" stroke-width="5.5"/>
<path d="M348.0 16.2 L323.4 6.0" stroke="#eadaeb" stroke-width="4.4"/>
<path d="M326.7 7.4 L324.7 0.5" stroke="#eadaeb" stroke-width="3.5"/>
<path d="M402.7 82.2 L403.6 96.0" stroke="#dbbddc" stroke-width="4.3"/>
<path d="M403.4 93.8 L396.5 101.2" stroke="#dbbddc" stroke-width="3.4"/>
<path d="M368.7 54.7 L352.0 55.7" stroke="#f4ecf4" stroke-width="4.5"/>
<path d="M360.2 55.2 L353.0 48.9" stroke="#f4ecf4" stroke-width="3.6"/>
<path d="M563.9 120.0 L548.3 116.2" stroke="#eadaeb" stroke-width="4.3"/>
<path d="M417.5 120.5 L410.1 128.1" stroke="#f0e4f0" stroke-width="4.4"/>
<path d="M411.9 126.3 L413.2 136.2" stroke="#f0e4f0" stroke-width="3.5"/>
<path d="M443.7 44.6 L428.1 44.4" stroke="#f4ecf4" stroke-width="4.8"/>
<path d="M333.3 60.6 L320.4 64.1" stroke="#f4ecf4" stroke-width="5.2"/>
<path d="M326.2 62.6 L319.2 59.0" stroke="#f4ecf4" stroke-width="4.2"/>
<path d="M340.0 46.9 L326.2 55.6" stroke="#d6b4d8" stroke-width="4.8"/>
<path d="M469.7 25.3 L444.6 21.5" stroke="#f4ecf4" stroke-width="4.0"/>
<path d="M503.7 80.5 L517.5 70.0" stroke="#e6d2e7" stroke-width="4.8"/>
<path d="M566.3 37.4 L581.1 53.6" stroke="#dbbddc" stroke-width="4.5"/>
<path d="M576.1 48.1 L587.4 49.7" stroke="#dbbddc" stroke-width="3.6"/>
<path d="M346.4 78.6 L321.3 68.5" stroke="#dbbddc" stroke-width="4.2"/>
<path d="M328.9 71.6 L323.0 73.6" stroke="#dbbddc" stroke-width="3.3"/>
<path d="M507.6 76.6 L513.1 65.8" stroke="#e0c6e1" stroke-width="4.6"/>
<path d="M452.3 63.1 L465.8 44.8" stroke="#eadaeb" stroke-width="5.4"/>
<path d="M459.6 53.2 L468.6 51.1" stroke="#eadaeb" stroke-width="4.3"/>
<path d="M475.6 102.4 L494.6 90.3" stroke="#e6d2e7" stroke-width="4.9"/>
<path d="M491.1 92.5 L500.2 93.7" stroke="#e6d2e7" stroke-width="3.9"/>
<path d="M391.2 85.1 L379.8 92.2" stroke="#eadaeb" stroke-width="4.3"/>
<path d="M382.4 90.6 L373.4 89.3" stroke="#eadaeb" stroke-width="3.5"/>
<path d="M354.6 41.9 L334.9 33.9" stroke="#f0e4f0" stroke-width="5.4"/>
<path d="M344.3 37.7 L341.9 29.8" stroke="#f0e4f0" stroke-width="4.3"/>
<path d="M482.4 76.6 L473.6 61.5" stroke="#d6b4d8" stroke-width="3.6"/>
<path d="M476.5 66.5 L479.9 57.7" stroke="#d6b4d8" stroke-width="2.9"/>
<path d="M520.8 -4.6 L520.6 -21.4" stroke="#e6d2e7" stroke-width="3.7"/>
<path d="M489.2 64.6 L512.3 72.7" stroke="#e6d2e7" stroke-width="5.4"/>
<path d="M346.1 27.8 L322.3 34.3" stroke="#f4ecf4" stroke-width="5.5"/>
<path d="M332.7 31.5 L328.0 41.3" stroke="#f4ecf4" stroke-width="4.4"/>
<path d="M507.0 21.7 L527.6 19.1" stroke="#eadaeb" stroke-width="4.8"/>
<path d="M523.3 19.7 L528.0 13.1" stroke="#eadaeb" stroke-width="3.8"/>
<path d="M444.8 44.7 L434.4 25.9" stroke="#f4ecf4" stroke-width="4.8"/>
<path d="M438.3 33.1 L428.3 29.4" stroke="#f4ecf4" stroke-width="3.8"/>
<path d="M486.1 75.2 L499.1 80.7" stroke="#eadaeb" stroke-width="4.4"/>
<path d="M494.6 78.8 L497.9 90.2" stroke="#eadaeb" stroke-width="3.6"/>
<path d="M507.9 28.0 L500.4 44.8" stroke="#eadaeb" stroke-width="4.9"/>
<path d="M502.0 41.2 L494.6 44.6" stroke="#eadaeb" stroke-width="3.9"/>
<path d="M341.7 -3.4 L318.8 2.8" stroke="#f0e4f0" stroke-width="4.8"/>
<path d="M326.3 0.7 L322.0 9.7" stroke="#f0e4f0" stroke-width="3.8"/>
<path d="M494.7 85.0 L489.3 101.5" stroke="#e6d2e7" stroke-width="4.2"/>
<path d="M442.6 55.4 L463.2 70.6" stroke="#f0e4f0" stroke-width="3.6"/>
<path d="M564.7 20.9 L576.0 17.1" stroke="#e0c6e1" stroke-width="5.1"/>
<path d="M571.9 18.5 L575.5 9.2" stroke="#e0c6e1" stroke-width="4.1"/>
<path d="M527.0 54.7 L546.7 51.5" stroke="#d6b4d8" stroke-width="3.9"/>
<path d="M538.8 52.7 L543.9 44.8" stroke="#d6b4d8" stroke-width="3.1"/>
<path d="M379.0 29.9 L366.2 22.5" stroke="#e0c6e1" stroke-width="5.2"/>
<path d="M367.6 70.6 L338.5 69.8" stroke="#e0c6e1" stroke-width="4.2"/>
<path d="M348.3 70.1 L341.4 76.8" stroke="#e0c6e1" stroke-width="3.4"/>
<path d="M526.4 12.2 L498.5 11.0" stroke="#d6b4d8" stroke-width="4.9"/>
<path d="M502.4 11.2 L497.7 5.8" stroke="#d6b4d8" stroke-width="3.9"/>
<path d="M391.9 86.4 L374.2 77.7" stroke="#e6d2e7" stroke-width="4.9"/>
<path d="M377.1 79.1 L368.1 81.3" stroke="#e6d2e7" stroke-width="3.9"/>
<path d="M327.8 -1.8 L307.7 -1.6" stroke="#eadaeb" stroke-width="4.0"/>
<path d="M362.6 34.3 L345.3 37.3" stroke="#e6d2e7" stroke-width="4.4"/>
<path d="M350.7 36.4 L345.3 45.0" stroke="#e6d2e7" stroke-width="3.6"/>
<path d="M344.1 104.2 L318.6 96.8" stroke="#e0c6e1" stroke-width="4.0"/>
<path d="M322.6 97.9 L316.3 101.0" stroke="#e0c6e1" stroke-width="3.2"/>
<path d="M552.1 10.6 L545.6 -11.4" stroke="#f0e4f0" stroke-width="4.1"/>
<path d="M548.1 -3.0 L552.6 -9.9" stroke="#f0e4f0" stroke-width="3.3"/>
<path d="M418.4 32.7 L394.9 47.6" stroke="#f4ecf4" stroke-width="4.3"/>
<path d="M400.7 44.0 L400.1 50.1" stroke="#f4ecf4" stroke-width="3.5"/>
<path d="M419.4 71.6 L404.1 77.5" stroke="#f0e4f0" stroke-width="3.6"/>
<path d="M351.7 1.3 L336.5 -4.9" stroke="#eadaeb" stroke-width="3.7"/>
<path d="M338.6 -4.0 L331.7 -1.7" stroke="#eadaeb" stroke-width="3.0"/>
<path d="M403.2 116.6 L401.1 133.5" stroke="#e0c6e1" stroke-width="4.3"/>
<path d="M401.5 130.9 L395.2 135.9" stroke="#e0c6e1" stroke-width="3.5"/>
<path d="M418.1 19.7 L445.0 13.6" stroke="#e6d2e7" stroke-width="5.1"/>
<path d="M486.0 100.6 L510.8 88.6" stroke="#f4ecf4" stroke-width="3.9"/>
<path d="M500.9 93.4 L503.4 82.7" stroke="#f4ecf4" stroke-width="3.1"/>
<path d="M503.6 66.4 L527.6 72.6" stroke="#eadaeb" stroke-width="4.1"/>
<path d="M520.4 70.7 L525.4 80.8" stroke="#eadaeb" stroke-width="3.3"/>
<path d="M510.9 53.6 L500.3 42.8" stroke="#eadaeb" stroke-width="4.2"/>
<path d="M502.2 44.8 L503.2 37.7" stroke="#eadaeb" stroke-width="3.4"/>
<path d="M552.2 1.4 L566.5 13.1" stroke="#e0c6e1" stroke-width="4.9"/>
<path d="M563.0 10.2 L571.4 10.2" stroke="#e0c6e1" stroke-width="3.9"/>
<path d="M400.8 39.7 L398.8 16.1" stroke="#f4ecf4" stroke-width="4.6"/>
<path d="M399.8 27.4 L404.2 22.5" stroke="#f4ecf4" stroke-width="3.7"/>
<path d="M486.8 28.8 L479.9 45.6" stroke="#eadaeb" stroke-width="3.6"/>
<path d="M481.5 41.6 L472.8 45.8" stroke="#eadaeb" stroke-width="2.9"/>
<path d="M370.0 46.3 L356.0 52.0" stroke="#f0e4f0" stroke-width="4.8"/>
<path d="M457.6 112.8 L462.9 135.0" stroke="#dbbddc" stroke-width="3.7"/>
<path d="M461.2 128.0 L466.8 131.6" stroke="#dbbddc" stroke-width="2.9"/>
<path d="M449.3 124.5 L459.2 134.1" stroke="#dbbddc" stroke-width="3.9"/>
<path d="M454.6 129.7 L462.8 130.3" stroke="#dbbddc" stroke-width="3.1"/>
<path d="M410.2 6.8 L423.9 13.9" stroke="#e6d2e7" stroke-width="5.1"/>
<path d="M418.5 11.1 L419.9 18.0" stroke="#e6d2e7" stroke-width="4.1"/>
<path d="M465.9 28.6 L485.3 15.3" stroke="#dbbddc" stroke-width="3.6"/>
<path d="M480.6 18.5 L481.1 9.6" stroke="#dbbddc" stroke-width="2.9"/>
<path d="M429.4 48.7 L410.9 46.4" stroke="#d6b4d8" stroke-width="4.5"/>
<path d="M344.0 39.0 L316.0 46.2" stroke="#f4ecf4" stroke-width="4.3"/>
<path d="M329.8 42.6 L321.4 38.1" stroke="#f4ecf4" stroke-width="3.5"/>
<path d="M449.5 11.4 L430.6 -4.7" stroke="#f4ecf4" stroke-width="5.5"/>
<path d="M393.5 23.1 L375.4 28.4" stroke="#f4ecf4" stroke-width="4.5"/>
<path d="M383.9 25.9 L377.3 22.7" stroke="#f4ecf4" stroke-width="3.6"/>
<path d="M559.0 53.0 L575.1 34.9" stroke="#dbbddc" stroke-width="3.8"/>
<path d="M567.1 43.9 L565.0 32.1" stroke="#dbbddc" stroke-width="3.0"/>
<path d="M334.8 -2.2 L307.9 -8.7" stroke="#eadaeb" stroke-width="5.2"/>
<path d="M471.5 56.5 L490.5 56.5" stroke="#dbbddc" stroke-width="3.8"/>
<path d="M485.4 56.5 L492.6 64.0" stroke="#dbbddc" stroke-width="3.0"/>
<path d="M531.2 115.5 L549.3 96.9" stroke="#dbbddc" stroke-width="3.9"/>
<path d="M545.7 100.6 L544.3 90.3" stroke="#dbbddc" stroke-width="3.1"/>
<path d="M354.5 27.3 L335.5 35.3" stroke="#f4ecf4" stroke-width="3.7"/>
<path d="M341.2 32.9 L330.3 29.3" stroke="#f4ecf4" stroke-width="2.9"/>
<path d="M556.4 83.7 L552.2 65.0" stroke="#dbbddc" stroke-width="3.6"/>
<path d="M554.3 74.2 L547.4 69.6" stroke="#dbbddc" stroke-width="2.9"/>
<path d="M445.5 94.4 L433.5 91.2" stroke="#f0e4f0" stroke-width="4.1"/>
<path d="M435.3 91.7 L431.2 83.0" stroke="#f0e4f0" stroke-width="3.3"/>
<path d="M394.5 96.7 L374.8 86.2" stroke="#f0e4f0" stroke-width="4.1"/>
<path d="M359.5 34.5 L337.5 40.9" stroke="#e0c6e1" stroke-width="4.4"/>
<path d="M341.4 39.7 L330.9 34.6" stroke="#e0c6e1" stroke-width="3.6"/>
<path d="M364.1 85.8 L346.4 95.5" stroke="#f4ecf4" stroke-width="3.8"/>
<path d="M349.7 93.7 L338.3 91.4" stroke="#f4ecf4" stroke-width="3.1"/>
</g>
<defs><linearGradient id="f1g" x1="1" y1="0" x2="0" y2="1"><stop offset="0" stop-color="#7f9ed6"/><stop offset="0.45" stop-color="#2f4c9c"/><stop offset="1" stop-color="#26398a"/></linearGradient><linearGradient id="f2g" x1="0" y1="0" x2="0" y2="1"><stop offset="0" stop-color="#8a78d8"/><stop offset="0.35" stop-color="#4a8ee0"/><stop offset="1" stop-color="#2fb0e6"/></linearGradient><clipPath id="f2c"><path d="M361.7 75.4 Q358 62 348 60 Q330 50 316 52.5 Q296 55 278 60 L286 66 L287 80 Q290 90 286 97 Q300 99 320 102 Q340 98 351 89.5 Q360 82 361.7 75.4 Z"/></clipPath></defs>
<path d="M240 39 Q250 20 270 4 Q282 -4 293 2 Q297 10 288 20 Q272 32 246 45 Z" fill="url(#f1g)"/>
<path d="M243 38 Q232 47 220 59 Q231 53 237 50 Q230 60 219 67.5 Q237 58 249 44 Z" fill="#263c8e"/>
<ellipse cx="276" cy="14" rx="9" ry="4" fill="#a8c0e6" opacity="0.55" transform="rotate(-40 276 14)"/>
<ellipse cx="288" cy="21" rx="3.6" ry="2" fill="#e4d23c" transform="rotate(-20 288 21)"/>
<ellipse cx="273" cy="13" rx="2.5" ry="2" fill="#e8e0a0" opacity="0.8"/>
<ellipse cx="247" cy="37" rx="4" ry="1.8" fill="#c86a48" opacity="0.85" transform="rotate(-40 247 37)"/>
<path d="M288 66 Q276 62 266 61.4 Q272 68 276 74 Q270 80 266.7 85.6 Q278 83 289 79 Z" fill="#2c62c8"/>
<path d="M268 62 Q274 66 278 71 L282 66 Z" fill="#c878b8" opacity="0.8"/>
<path d="M286 92 Q282 97 281 99 Q295 100 305 99 Z" fill="#2a6ad0"/>
<path d="M361.7 75.4 Q358 62 348 60 Q330 50 316 52.5 Q296 55 278 60 L286 66 L287 80 Q290 90 286 97 Q300 99 320 102 Q340 98 351 89.5 Q360 82 361.7 75.4 Z" fill="url(#f2g)"/>
<g clip-path="url(#f2c)"><ellipse cx="306" cy="60" rx="7" ry="6" fill="#e8b050" opacity="0.9"/><ellipse cx="323" cy="57" rx="6" ry="6" fill="#eab858" opacity="0.9"/><ellipse cx="345" cy="64" rx="11" ry="6" fill="#b494e4" opacity="0.85"/><path d="M292 56 L296 98 M302 54 L306 100 M317 52 L321 102 M333 54 L336 98" stroke="#161a48" stroke-width="4.2"/></g>
<circle cx="353.4" cy="71.6" r="2.6" fill="#d87028"/><circle cx="353.4" cy="71.6" r="1.2" fill="#3a1a10"/>
<path d="M331 91 Q338 86 345 84" stroke="#d8b8f0" stroke-width="2.5" stroke-linecap="round"/>
</svg>
</div>
<!-- modal -->
<div class="a" id="modal" style="left:110px;top:214px;width:717px;height:530px;background:#29282a;border-radius:7px 7px 0 0"></div>
<div class="a" style="left:102px;top:222px;width:8px;height:522px;background:linear-gradient(90deg,rgba(0,0,0,0),rgba(0,0,0,0.12))"></div>
<div class="a" style="left:110px;top:220px;width:1.5px;height:524px;background:#232224"></div>
<div class="a" style="left:827px;top:222px;width:10px;height:522px;background:linear-gradient(90deg,rgba(0,0,0,0.2),rgba(0,0,0,0))"></div>
<div class="a" style="left:824px;top:220px;width:3px;height:524px;background:#242325"></div>
<div class="a" style="left:110px;top:252px;width:717px;height:1px;background:#252426"></div>
<div class="a" style="left:110px;top:255px;width:717px;height:1px;background:#323133"></div>
<div class="a" style="left:305px;top:256px;width:1px;height:488px;background:#343334"></div>
<div class="a" style="left:125px;top:227.5px;font-size:13px;font-weight:bold;letter-spacing:-0.5px;color:#f4f4f4;line-height:16px">Preferences</div>
<svg style="left:0;top:0" width="941" height="954" fill="none" stroke="#dedede" stroke-width="1.3">
  <path d="M801.5 229 L813.5 241 M813.5 229 L801.5 241"/>
</svg>


<!-- CONTENT -->
<div class="a" style="left:331px;top:282px;font-size:12px;font-weight:bold;letter-spacing:-0.25px;color:#f4f4f4;line-height:16px">Appearance</div>
<div class="a" style="left:331px;top:313px;width:128px;height:132px;background:#211f21;border-radius:7px;border:1.3px solid #7565d0;"></div>
<div class="a" style="left:339px;top:321px;width:112px;height:82px;border-radius:4px;overflow:hidden"><div class="a" style="left:0px;top:0px;width:56px;height:82px;overflow:hidden;background:linear-gradient(180deg, rgba(0,0,0,0) 20%, rgba(98,84,246,0.55) 100%), linear-gradient(100deg,#6d84f7 0%,#9a5ed8 100%)">
<div class="a" style="left:9px;top:18px;width:47px;height:64px;background:#3b3b3c;border-top-left-radius:4px;overflow:hidden">
<div class="a" style="left:0;top:0;width:25.5px;height:64px;background:#2c2c2d"></div>
<div class="a" style="left:7.5px;top:7.5px;width:11px;height:11px;border-radius:4px;background:#6f78f6"></div>
<div class="a" style="left:7.5px;top:24px;width:11px;height:11px;border-radius:5px;background:#3e3e3f"></div>
<div class="a" style="left:7.5px;top:40px;width:11px;height:11px;border-radius:5px;background:#3e3e3f"></div>
<div class="a" style="left:7.5px;top:56px;width:11px;height:11px;border-radius:5px;background:#3e3e3f"></div>
<div class="a" style="left:39px;top:13px;width:45px;height:2.2px;background:#7779f0"></div>
<div class="a" style="left:39px;top:20.5px;width:45px;height:2.2px;background:#7779f0"></div>
<div class="a" style="left:39px;top:28.5px;width:45px;height:1.4px;background:#4c4c4d"></div>
<div class="a" style="left:39px;top:36px;width:45px;height:1.4px;background:#4c4c4d"></div>
<div class="a" style="left:39px;top:43.5px;width:45px;height:1.4px;background:#4c4c4d"></div>
<div class="a" style="left:39px;top:51.2px;width:45px;height:1.4px;background:#4c4c4d"></div>
</div></div><div class="a" style="left:56px;top:0px;width:56px;height:82px;overflow:hidden;background:linear-gradient(180deg, rgba(0,0,0,0) 25%, rgba(170,120,245,0.5) 100%), linear-gradient(100deg,#e285f8 0%,#c888f4 100%)">
<div class="a" style="left:9px;top:18px;width:47px;height:64px;background:#e0e0e2;border-top-left-radius:4px;overflow:hidden">
<div class="a" style="left:0;top:0;width:25.5px;height:64px;background:#ebebec"></div>
<div class="a" style="left:7.5px;top:7.5px;width:11px;height:11px;border-radius:4px;background:#6a70ef"></div>
<div class="a" style="left:7.5px;top:24px;width:11px;height:11px;border-radius:5px;background:#e1e1e3"></div>
<div class="a" style="left:7.5px;top:40px;width:11px;height:11px;border-radius:5px;background:#e1e1e3"></div>
<div class="a" style="left:7.5px;top:56px;width:11px;height:11px;border-radius:5px;background:#e1e1e3"></div>
<div class="a" style="left:39px;top:13px;width:45px;height:2.2px;background:#7579ee"></div>
<div class="a" style="left:39px;top:20.5px;width:45px;height:2.2px;background:#7579ee"></div>
<div class="a" style="left:39px;top:28.5px;width:45px;height:1.4px;background:#d6d6d8"></div>
<div class="a" style="left:39px;top:36px;width:45px;height:1.4px;background:#d6d6d8"></div>
<div class="a" style="left:39px;top:43.5px;width:45px;height:1.4px;background:#d6d6d8"></div>
<div class="a" style="left:39px;top:51.2px;width:45px;height:1.4px;background:#d6d6d8"></div>
</div></div></div>
<div class="a lab" style="left:331px;top:420.5px;color:#f2f2f2">Auto</div>
<div class="a" style="left:484px;top:313px;width:128px;height:132px;background:#211f21;border-radius:7px;border:1.3px solid #7565d0;"></div>
<div class="a" style="left:492px;top:321px;width:112px;height:82px;border-radius:4px;overflow:hidden;background:linear-gradient(180deg, rgba(0,0,0,0) 20%, rgba(98,84,246,0.55) 100%), linear-gradient(100deg,#6d84f7 0%,#9a68e2 50%,#b270f2 100%)">
<div class="a" style="left:16px;top:18px;width:96px;height:64px;background:#3b3b3c;border-top-left-radius:4px;overflow:hidden">
<div class="a" style="left:0;top:0;width:25.5px;height:64px;background:#2c2c2d"></div>
<div class="a" style="left:7.5px;top:7.5px;width:11px;height:11px;border-radius:4px;background:#6f78f6"></div>
<div class="a" style="left:7.5px;top:24px;width:11px;height:11px;border-radius:5px;background:#3e3e3f"></div>
<div class="a" style="left:7.5px;top:40px;width:11px;height:11px;border-radius:5px;background:#3e3e3f"></div>
<div class="a" style="left:7.5px;top:56px;width:11px;height:11px;border-radius:5px;background:#3e3e3f"></div>
<div class="a" style="left:39px;top:13px;width:45px;height:2.2px;background:#7779f0"></div>
<div class="a" style="left:39px;top:20.5px;width:45px;height:2.2px;background:#7779f0"></div>
<div class="a" style="left:39px;top:28.5px;width:45px;height:1.4px;background:#4c4c4d"></div>
<div class="a" style="left:39px;top:36px;width:45px;height:1.4px;background:#4c4c4d"></div>
<div class="a" style="left:39px;top:43.5px;width:45px;height:1.4px;background:#4c4c4d"></div>
<div class="a" style="left:39px;top:51.2px;width:45px;height:1.4px;background:#4c4c4d"></div>
</div></div>
<div class="a lab" style="left:484px;top:420.5px;color:#8783ee">Dark</div>
<div class="a" style="left:637px;top:313px;width:128px;height:132px;background:#211f21;border-radius:7px;"></div>
<div class="a" style="left:645px;top:321px;width:112px;height:82px;border-radius:4px;overflow:hidden;background:linear-gradient(180deg, rgba(0,0,0,0) 25%, rgba(176,128,248,0.6) 100%), linear-gradient(100deg,#e883f5 0%,#ad8af6 55%,#7b97f6 100%)">
<div class="a" style="left:16px;top:18px;width:96px;height:64px;background:#e0e0e2;border-top-left-radius:4px;overflow:hidden">
<div class="a" style="left:0;top:0;width:25.5px;height:64px;background:#ebebec"></div>
<div class="a" style="left:7.5px;top:7.5px;width:11px;height:11px;border-radius:4px;background:#6a70ef"></div>
<div class="a" style="left:7.5px;top:24px;width:11px;height:11px;border-radius:5px;background:#e1e1e3"></div>
<div class="a" style="left:7.5px;top:40px;width:11px;height:11px;border-radius:5px;background:#e1e1e3"></div>
<div class="a" style="left:7.5px;top:56px;width:11px;height:11px;border-radius:5px;background:#e1e1e3"></div>
<div class="a" style="left:39px;top:13px;width:45px;height:2.2px;background:#7579ee"></div>
<div class="a" style="left:39px;top:20.5px;width:45px;height:2.2px;background:#7579ee"></div>
<div class="a" style="left:39px;top:28.5px;width:45px;height:1.4px;background:#d6d6d8"></div>
<div class="a" style="left:39px;top:36px;width:45px;height:1.4px;background:#d6d6d8"></div>
<div class="a" style="left:39px;top:43.5px;width:45px;height:1.4px;background:#d6d6d8"></div>
<div class="a" style="left:39px;top:51.2px;width:45px;height:1.4px;background:#d6d6d8"></div>
</div></div>
<div class="a lab" style="left:637px;top:420.5px;color:#f2f2f2">Light</div>
<div class="a" style="left:331px;top:470px;width:128px;height:132px;background:#211f21;border-radius:7px;"></div>
<div class="a" style="left:339px;top:478px;width:112px;height:82px;border-radius:4px;overflow:hidden;background:linear-gradient(180deg, rgba(0,0,0,0) 20%, rgba(52,110,244,0.6) 100%), linear-gradient(100deg,#52c4fa 0%,#3a9af6 55%,#2a7ef2 100%)">
<div class="a" style="left:16px;top:18px;width:96px;height:64px;background:#4b4b56;border-top-left-radius:4px;overflow:hidden">
<div class="a" style="left:0;top:0;width:25.5px;height:64px;background:#3a3a44"></div>
<div class="a" style="left:7.5px;top:7.5px;width:11px;height:11px;border-radius:4px;background:#3a72f4"></div>
<div class="a" style="left:7.5px;top:24px;width:11px;height:11px;border-radius:5px;background:#50505a"></div>
<div class="a" style="left:7.5px;top:40px;width:11px;height:11px;border-radius:5px;background:#50505a"></div>
<div class="a" style="left:7.5px;top:56px;width:11px;height:11px;border-radius:5px;background:#50505a"></div>
<div class="a" style="left:39px;top:13px;width:45px;height:2.2px;background:#4a7cf2"></div>
<div class="a" style="left:39px;top:20.5px;width:45px;height:2.2px;background:#4a7cf2"></div>
<div class="a" style="left:39px;top:28.5px;width:45px;height:1.4px;background:#66666f"></div>
<div class="a" style="left:39px;top:36px;width:45px;height:1.4px;background:#66666f"></div>
<div class="a" style="left:39px;top:43.5px;width:45px;height:1.4px;background:#66666f"></div>
<div class="a" style="left:39px;top:51.2px;width:45px;height:1.4px;background:#66666f"></div>
</div></div>
<div class="a lab" style="left:331px;top:577.5px;color:#f2f2f2">Starry Blue</div>
<div class="a" style="left:484px;top:470px;width:128px;height:132px;background:#211f21;border-radius:7px;"></div>
<div class="a" style="left:492px;top:478px;width:112px;height:82px;border-radius:4px;overflow:hidden;background:linear-gradient(180deg, rgba(0,0,0,0) 25%, rgba(110,192,105,0.8) 100%), linear-gradient(100deg,#3fcfbc 0%,#36b89c 55%,#2ea488 100%)">
<div class="a" style="left:16px;top:18px;width:96px;height:64px;background:#dfe4dd;border-top-left-radius:4px;overflow:hidden">
<div class="a" style="left:0;top:0;width:25.5px;height:64px;background:#e9ece7"></div>
<div class="a" style="left:7.5px;top:7.5px;width:11px;height:11px;border-radius:4px;background:#3e9a64"></div>
<div class="a" style="left:7.5px;top:24px;width:11px;height:11px;border-radius:5px;background:#e0e5de"></div>
<div class="a" style="left:7.5px;top:40px;width:11px;height:11px;border-radius:5px;background:#e0e5de"></div>
<div class="a" style="left:7.5px;top:56px;width:11px;height:11px;border-radius:5px;background:#e0e5de"></div>
<div class="a" style="left:39px;top:13px;width:45px;height:2.2px;background:#4daa72"></div>
<div class="a" style="left:39px;top:20.5px;width:45px;height:2.2px;background:#4daa72"></div>
<div class="a" style="left:39px;top:28.5px;width:45px;height:1.4px;background:#d2d8d0"></div>
<div class="a" style="left:39px;top:36px;width:45px;height:1.4px;background:#d2d8d0"></div>
<div class="a" style="left:39px;top:43.5px;width:45px;height:1.4px;background:#d2d8d0"></div>
<div class="a" style="left:39px;top:51.2px;width:45px;height:1.4px;background:#d2d8d0"></div>
</div></div>
<div class="a lab" style="left:484px;top:577.5px;color:#f2f2f2">Mint Green</div>
<div class="a" style="left:331px;top:628px;width:473px;height:1px;background:#2c2b2e"></div>
<div class="a" style="left:330px;top:662px;font-size:12px;font-weight:bold;letter-spacing:-0.35px;color:#f4f4f4;line-height:16px">Basic Tools</div>
<div class="a" style="left:331px;top:694px;width:473px;height:50px;background:#313031;border-radius:7px 7px 0 0"></div>
<div class="a" style="left:355px;top:718px;width:16.5px;height:16.5px;background:#7878f6;border-radius:3px"></div>
<svg style="left:0;top:0" width="941" height="954" fill="none" stroke="#fff" stroke-width="1.8" stroke-linecap="round" stroke-linejoin="round">
  <path d="M359 726.5 L362 729.5 L367.5 722.5"/>
</svg>
<div class="a" style="left:381px;top:719px;font-size:12.2px;letter-spacing:-0.3px;color:#e4e4e4;line-height:16px;white-space:nowrap">Always close all tabs</div>

<!-- nav -->
<div class="a" style="left:122px;top:271px;width:166px;height:47px;background:#4646d6;border-radius:2px"></div>
<div class="a" style="left:126px;top:275px;width:160px;height:39px;background:#7678f6;border-radius:6px"></div>
<div class="a nav" style="top:286px">General</div>
<div class="a nav" style="top:343px">View</div>
<div class="a nav" style="top:400px">Commenting</div>
<div class="a nav" style="top:457px">Measuring</div>
<div class="a nav" style="top:514px">UPDF Cloud</div>
<div class="a nav" style="top:571px">UPDF AI</div>
<div class="a nav" style="top:628px">Plugin</div>
<div class="a nav" style="top:685px">Updater</div>
<svg style="left:0;top:0" width="941" height="954" class="ico" stroke-width="1.2" stroke="#e2e2e2">
  <path d="M139.5 284.5 L143 284.5 L144 287 L146.5 285.8 L149 288.3 L147.8 290.8 L150.5 291.8 V295.3 L147.8 296.3 L149 298.8 L146.5 301.3 L144 300 L143 302.6 H139.5 L138.5 300 L136 301.3 L133.5 298.8 L134.7 296.3 L132 295.3 V291.8 L134.7 290.8 L133.5 288.3 L136 285.8 L138.5 287 Z" stroke="#f0f0ff"/>
  <circle cx="141.3" cy="293.5" r="2.8" stroke="#f0f0ff"/>
  <rect x="132.5" y="341" width="18" height="17.5" rx="3"/>
  <path d="M132.5 346.5 H150.5 M138.5 346.5 V358.5"/>
  <path d="M141 416.5 Q131.5 416.5 131.5 407 Q131.5 398 141 398 Q150.5 398 150.5 407 Q150.5 411.5 148 413.5 L150.5 416.5 Z"/>
  <path d="M137 405 H143.5 M137 409.5 H141"/>
  <path d="M131.5 455.5 H150.5 M131.5 454 V457 M150.5 454 V457"/>
  <rect x="131.5" y="461" width="19" height="12.5" rx="3.5"/>
  <path d="M131.5 467.5 H150.5 M134.5 461 V464 M138 461 V464 M141 461 V464 M144 461 V464 M147.5 461 V464" stroke-width="1"/>
  <path d="M136 530.5 Q130.5 530.5 130.5 525.5 Q130.5 521.5 134.5 521 Q135.5 512 143 512 Q150 512 150.5 520 Q153 521.5 153 525 Q153 530.5 148 530.5 Z"/>
  <path d="M134.5 521 Q138 520.5 139.5 523"/>
  <ellipse cx="141.3" cy="578.4" rx="6.8" ry="11.3" transform="rotate(15 141.3 578.4)"/>
  <ellipse cx="141.3" cy="578.4" rx="11.3" ry="6.8" transform="rotate(15 141.3 578.4)"/>
  <path d="M141.2 574.5 L142.2 577.5 L145.2 578.5 L142.2 579.5 L141.2 582.5 L140.2 579.5 L137.2 578.5 L140.2 577.5 Z" fill="#e2e2e2" stroke-width="0.6"/>
  <path d="M137.5 627.5 Q137.5 624.5 140.5 624.5 Q143.5 624.5 143.5 627.5 H149.5 V632.5 Q152 632.5 152 635 Q152 638 149.5 638 V643.5 H143 Q143 640.5 140 640.5 Q137 640.5 137 643.5 H131.5 V637 Q134.5 637 134.5 634.5 Q134.5 632 131.5 632 V627.5 Z"/>
  <rect x="132" y="683.5" width="19" height="18.5" rx="3"/>
  <path d="M132 693.5 H136.5 Q137.5 697 141.5 697 Q145.5 697 146.5 693.5 H151"/>
  <path d="M141.5 692.5 V686.5 M139 689 L141.5 686.5 L144 689"/>
</svg>



<!-- BOTTOM TOOLBAR -->
<div class="a" style="left:468px;top:911px;width:465px;height:41px;border:1px solid #3b3b3b;border-radius:8px;background:#333333"></div>
<div class="a" style="left:475.5px;top:923px;width:16px;height:16px;border-radius:50%;background:#4c4c4c"></div>
<svg style="left:0;top:0" width="941" height="954" class="ico" stroke-width="1.3">
  <path d="M482.3 928.5 L484.8 931 L482.3 933.5" stroke="#e8e8e8" stroke-width="1.2"/>
  <rect x="506.5" y="924" width="19" height="15.5" rx="2.5"/>
  <path d="M516 924 V939.5"/>
  <path d="M509 928.5 H513 M509 931.5 H513 M509 934.5 H511 M519 928.5 H523 M519 931.5 H523 M519 934.5 H521" stroke-width="1"/>
  <path d="M552 937 H549.5 Q547 937 547 934.5 V926.5 Q547 924 549.5 924 H565.5 Q568 924 568 926.5 V934.5 Q568 937 565.5 937 H563"/>
  <path d="M557.5 935.5 L554.5 940.5 H560.5 Z"/>
  <path d="M582.4 925 V938" stroke="#4a4a4a"/>
  <path d="M680.5 933.5 L685.5 928.5 L690.5 933.5" stroke="#5a5a5a"/>
  <path d="M720.5 929.8 L725.7 935 L730.9 929.8"/>
  <path d="M751.3 925 V938" stroke="#4a4a4a"/>
  <path d="M827 931.5 H838.5"/>
  <path d="M868 931.5 H879.5 M873.75 925.7 V937.3"/>
  <rect x="905.5" y="924" width="19" height="15.5" rx="3"/>
</svg>
<div class="a" style="left:591px;top:915px;width:32.5px;height:33px;background:#1f1f1f;border:1.5px solid #5c60d6;border-radius:7px"></div>
<div class="a" style="left:630px;top:915px;width:29.5px;height:33px;background:#1f1f1f;border-radius:7px"></div>
<div class="a" style="left:591px;top:923px;width:32.5px;text-align:center;font-size:16px;color:#f2f2f2;line-height:17px">1</div>
<div class="a" style="left:630px;top:923px;width:29.5px;text-align:center;font-size:16px;color:#f2f2f2;line-height:17px">2</div>
<div class="a" style="left:760px;top:918px;width:47px;height:26px;background:#1f1f1f;border-radius:7px"></div>
<div class="a" style="left:760px;top:924.5px;width:47px;text-align:center;font-size:13px;letter-spacing:-0.6px;color:#eaeaea;line-height:15px">80%</div>
<div class="a" style="left:905.5px;top:927px;width:19px;text-align:center;font-size:8px;font-weight:bold;letter-spacing:-0.3px;color:#eaeaea;line-height:10px">1:1</div>

<!-- ANNOTATIONS -->
<svg style="left:0;top:0" width="941" height="954">
  <line x1="790.5" y1="52.5" x2="282" y2="233" stroke="#3d3bd6" stroke-width="8.5" stroke-linecap="round"/>
  <polygon points="253,243 277.7,220 280,232.5 287.1,245.9" fill="#3d3bd6"/>
  <line x1="305" y1="298.2" x2="446" y2="319.2" stroke="#3d3bd6" stroke-width="8" stroke-linecap="round"/>
  <polygon points="470.5,323 444.2,306.8 445,320 439.1,333.3" fill="#3d3bd6"/>
</svg>
<div class="a" style="left:467px;top:296px;width:161.5px;height:162px;border:4px solid #4747d6"></div>

</body></html>
